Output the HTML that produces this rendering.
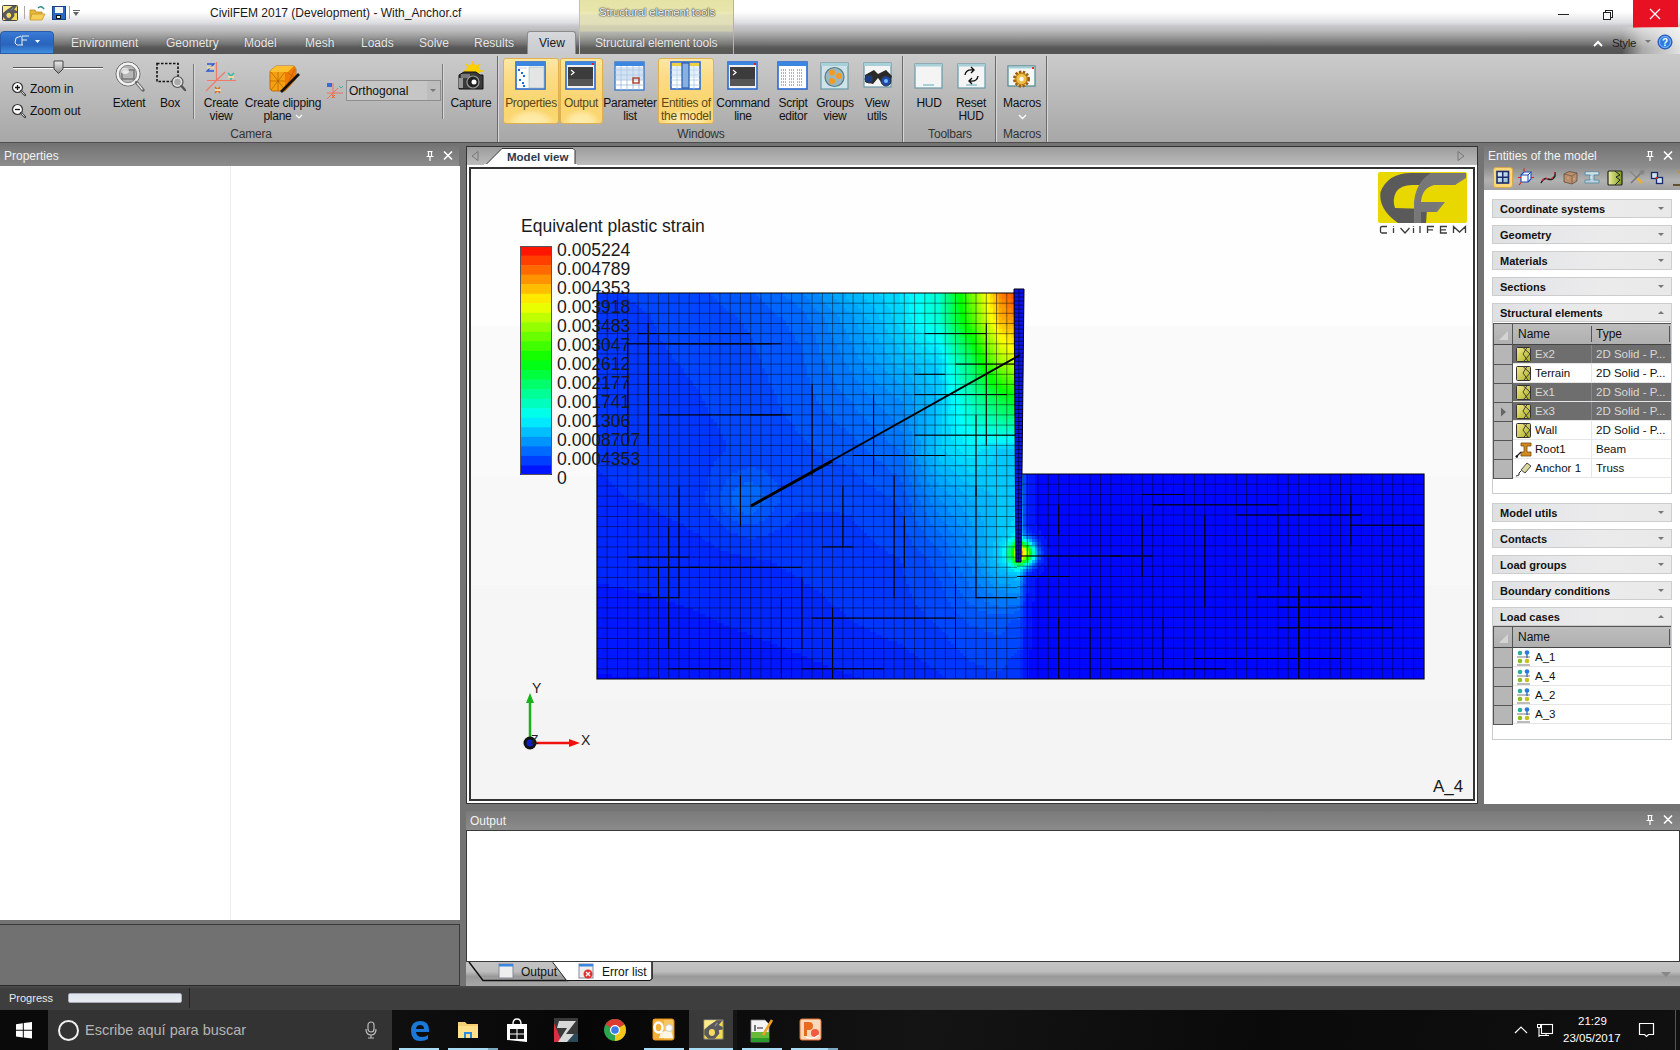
<!DOCTYPE html>
<html><head><meta charset="utf-8">
<style>
*{margin:0;padding:0;box-sizing:border-box}
html,body{width:1680px;height:1050px;overflow:hidden;background:#737373;font-family:"Liberation Sans",sans-serif;font-size:12px;position:relative;color:#111}
.a{position:absolute}
.t{position:absolute;white-space:nowrap;line-height:14px}
.c{position:absolute;white-space:nowrap;line-height:13px;text-align:center;width:120px;letter-spacing:-0.25px;color:#111}
#top{left:0;top:0;width:1680px;height:54px;background:linear-gradient(#fff 0px,#fff 12px,#f0f0f1 17px,#dcdde0 23px,#c8c8cc 26px,#bdbdbd 30px,#a5a5a5 35px,#8a8a8a 40px,#737373 44px,#5c5c5c 47px,#555 49px,#555 54px)}
#ribbon{left:0;top:54px;width:1680px;height:89px;background:linear-gradient(#cbcbcb,#a7a7a7);border-bottom:1px solid #4e4e4e}
.tab{position:absolute;top:35px;line-height:16px;color:#e6e6e6;text-shadow:0 0 2px #555}
.ph{position:absolute;background:linear-gradient(#767676,#8c8c8c);color:#f2f2f2;font-size:12px;line-height:20px;padding-left:4px}
.hl{position:absolute;top:58px;height:66px;border:1px solid #e0b050;border-radius:3px;background:radial-gradient(ellipse 45% 22% at 50% 100%,#fdeeb0 0%,#fde8a0 60%,rgba(253,232,160,0) 100%),linear-gradient(#fce7a4 0%,#fbdb84 30%,#fad674 60%,#fbd670 85%,#fbd878 100%)}
.gl{position:absolute;top:128px;color:#333;line-height:13px;text-align:center;width:120px;letter-spacing:-0.2px}
.sep{position:absolute;width:1px;background:#8a8a8a;border-right:1px solid #d0d0d0}
.gsep{position:absolute;top:56px;height:86px;width:1px;background:#6a6a6a;border-right:1px solid #d6d6d6;box-sizing:content-box}
.sec{position:absolute;left:1492px;width:180px;height:19px;border:1px solid #cdcdcd;background:linear-gradient(90deg,#dfe0e2 0,#e6e7e8 30%,#ebebec 60%,#e9e9ea 100%);font-weight:bold;font-size:11px;line-height:19px;padding-left:7px;color:#111}
.sec:after{content:"";position:absolute;right:7px;top:7px;border-left:3px solid transparent;border-right:3px solid transparent;border-top:3px solid #777}
.sec.up:after{border-top:none;border-bottom:3px solid #777}
#status{left:0;top:986px;width:1680px;height:24px;background:linear-gradient(#4c4c4c,#3e3e3e 3px,#3e3e3e)}
#task{left:0;top:1010px;width:1680px;height:40px;background:#111}
</style></head><body>
<!-- TOP BAR -->
<div id="top" class="a"></div>
<!-- QAT -->
<svg class="a" style="left:2px;top:5px" width="16" height="16"><rect x="0.5" y="0.5" width="15" height="15" rx="1" fill="#f4dc50" stroke="#444"/><path d="M1 1H10L1 9Z" fill="#fff0a0" opacity="0.8"/><path d="M10.5 1H15L12 4.5L15 6V8L12 8.5L12.5 11L9 15H4L1 12V8L4.5 5Z" fill="#5a5a5e"/><ellipse cx="6.8" cy="10.3" rx="2.3" ry="2.6" fill="#f6dc60"/><path d="M9 5.5L11 3" stroke="#9a9aa0" stroke-width="0.8"/></svg>
<div class="a" style="left:24px;top:6px;width:1px;height:13px;background:#aaa"></div>
<svg class="a" style="left:29px;top:5px" width="17" height="16"><path d="M1 5 L6 5 L7 7 L13 7 L13 14 L1 14Z" fill="#e8b83c" stroke="#b88a20" stroke-width="0.8"/><path d="M3 9 L16 9 L13 15 L1 15Z" fill="#f5cf5a" stroke="#c9952a" stroke-width="0.8"/><path d="M9 3 Q12 0 15 4" stroke="#2a8a8a" stroke-width="1.5" fill="none"/></svg>
<svg class="a" style="left:52px;top:6px" width="14" height="14"><rect x="0.5" y="0.5" width="13" height="13" fill="#2a66c8" stroke="#1a3f8a"/><rect x="3" y="1" width="8" height="6" fill="#f4f4f4"/><rect x="4" y="9" width="5" height="4" fill="#111"/><rect x="5" y="10" width="3" height="2" fill="#eee"/></svg>
<div class="a" style="left:69px;top:6px;width:1px;height:13px;background:#aaa"></div>
<div class="a" style="left:73px;top:10px;width:7px;height:1px;background:#666"></div>
<div class="a" style="left:73px;top:12px;border-left:3.5px solid transparent;border-right:3.5px solid transparent;border-top:4px solid #666"></div>
<div class="t" style="left:210px;top:6px;font-size:12px;color:#1a1a1a">CivilFEM 2017 (Development) - With_Anchor.cf</div>
<!-- contextual tab header -->
<div class="a" style="left:579px;top:0;width:155px;height:54px;border-left:1px solid #c8c690;border-right:1px solid #b8b690;background:linear-gradient(#e6e3a6 0,#e8e5ac 11px,#eceab4 13px,#e3e1b8 15px,#e1dfba 24px,#d2d0b2 26px,#cfcdb0 31px,rgba(200,200,160,0.15) 32px,rgba(200,200,160,0.08) 40px,rgba(200,200,160,0.04) 54px)"></div>
<div class="t" style="left:599px;top:5px;font-size:11.5px;color:#fafafa;text-shadow:0 0 1px #333,0 0 1px #333,0 0 2px #555"><span style="letter-spacing:-0.2px">Structural element tools</span></div>
<!-- window controls -->
<div class="a" style="left:1558px;top:14px;width:11px;height:1px;background:#222"></div>
<div class="a" style="left:1605px;top:10px;width:8px;height:8px;border:1px solid #222"></div>
<div class="a" style="left:1603px;top:12px;width:8px;height:8px;border:1px solid #222;background:#f7f7f7"></div>
<div class="a" style="left:1633px;top:0;width:45px;height:28px;background:#e81123"></div>
<svg class="a" style="left:1649px;top:8px" width="12" height="12"><path d="M1 1L11 11M11 1L1 11" stroke="#fff" stroke-width="1.3"/></svg>
<!-- app button & tabs -->
<div class="a" style="left:0;top:31px;width:54px;height:23px;border-radius:4px 4px 0 0;background:linear-gradient(#3a7bd5 0,#2f6ec8 30%,#2a64bc 60%,#3f8fe0 100%);border:1px solid #2a5aa8"></div>
<svg class="a" style="left:14px;top:35px" width="30" height="13"><path d="M7 1 L2 3 L1 8 L3 10 L9 10 M8 1 L15 1 M8 1 L8 10 M8 5 L13 5" stroke="#e8f0f0" stroke-width="1" fill="none"/><path d="M21 5 L26 5 L23.5 8Z" fill="#fff"/></svg>
<div class="tab" style="left:71px">Environment</div>
<div class="tab" style="left:166px">Geometry</div>
<div class="tab" style="left:244px">Model</div>
<div class="tab" style="left:305px">Mesh</div>
<div class="tab" style="left:361px">Loads</div>
<div class="tab" style="left:419px">Solve</div>
<div class="tab" style="left:474px">Results</div>
<div class="a" style="left:527px;top:31px;width:49px;height:23px;border-radius:3px 3px 0 0;background:linear-gradient(#d6d8dc,#c8cacd);border:1px solid #8c8c8c;border-bottom:none"></div>
<div class="tab" style="left:539px;color:#1a1a1a;text-shadow:none">View</div>
<div class="tab" style="left:595px;letter-spacing:-0.15px">Structural element tools</div>
<div class="a" style="left:1622px;top:27px;width:58px;height:27px;background:linear-gradient(90deg,rgba(255,255,255,0) 0,rgba(240,240,240,0.55) 35%,rgba(250,250,250,0.85) 100%)"></div>
<div class="a" style="left:1593px;top:37px;width:10px;height:8px"><svg width="10" height="8"><path d="M1 6 L5 2 L9 6" stroke="#fff" stroke-width="2" fill="none"/></svg></div>
<div class="t" style="left:1612px;top:36px;color:#222;font-size:11.5px;letter-spacing:-0.3px">Style</div>
<div class="a" style="left:1645px;top:40px;border-left:3px solid transparent;border-right:3px solid transparent;border-top:3px solid #777"></div>
<svg class="a" style="left:1657px;top:34px" width="16" height="16"><circle cx="8" cy="8" r="7" fill="#2f7ae0" stroke="#1a4ea8"/><circle cx="8" cy="8" r="5.5" fill="none" stroke="#9cc8ff" stroke-width="0.8"/><text x="8" y="12" font-size="10" font-weight="bold" fill="#fff" text-anchor="middle" font-family="Liberation Sans">?</text></svg>

<!-- RIBBON -->
<div id="ribbon" class="a"></div>
<!-- camera group -->
<div class="a" style="left:13px;top:67px;width:90px;height:2px;background:linear-gradient(#555 50%,#fff 50%)"></div>
<svg class="a" style="left:53px;top:60px" width="11" height="15"><path d="M1 1H10V9L5.5 13.5L1 9Z" fill="url(#thumbg)" stroke="#444" stroke-width="1"/><defs><linearGradient id="thumbg" x1="0" y1="0" x2="0" y2="1"><stop offset="0" stop-color="#eee"/><stop offset="1" stop-color="#888"/></linearGradient></defs></svg>
<svg class="a" style="left:11px;top:81px" width="16" height="16"><circle cx="6.5" cy="6.5" r="5" fill="#fafafa" stroke="#333" stroke-width="1.2"/><path d="M4 6.5H9M6.5 4V9" stroke="#111" stroke-width="1.3"/><path d="M10 10L14 14" stroke="#444" stroke-width="2.4" stroke-linecap="round"/><path d="M10.5 10.5L13.5 13.5" stroke="#ddd" stroke-width="1"/></svg>
<div class="t" style="left:30px;top:82px">Zoom in</div>
<svg class="a" style="left:11px;top:103px" width="16" height="16"><circle cx="6.5" cy="6.5" r="5" fill="#fafafa" stroke="#333" stroke-width="1.2"/><path d="M4 6.5H9" stroke="#111" stroke-width="1.3"/><path d="M10 10L14 14" stroke="#444" stroke-width="2.4" stroke-linecap="round"/><path d="M10.5 10.5L13.5 13.5" stroke="#ddd" stroke-width="1"/></svg>
<div class="t" style="left:30px;top:104px">Zoom out</div>
<!-- Extent -->
<svg class="a" style="left:113px;top:60px" width="34" height="34"><circle cx="15" cy="14" r="12" fill="#c8c8c8" stroke="#666" stroke-width="1"/><circle cx="15" cy="14" r="10.3" fill="none" stroke="#f2f2f2" stroke-width="2.2"/><circle cx="15" cy="14" r="8.6" fill="#b8b8b8" stroke="#777" stroke-width="0.8"/><rect x="9" y="10" width="12" height="9" fill="none" stroke="#666" stroke-width="1.2"/><ellipse cx="12" cy="11" rx="4" ry="3" fill="#fff" opacity="0.7"/><path d="M23.5 22.5L30 30" stroke="#666" stroke-width="3.4" stroke-linecap="round"/><path d="M24 23L29.5 29.5" stroke="#eee" stroke-width="1.2"/></svg>
<div class="c" style="left:69px;top:97px">Extent</div>
<!-- Box -->
<svg class="a" style="left:156px;top:62px" width="32" height="32"><rect x="1" y="1.5" width="21" height="18" fill="none" stroke="#111" stroke-width="1.6" stroke-dasharray="2.5 1.5"/><circle cx="21.5" cy="20" r="5.5" fill="#ccc" stroke="#555" stroke-width="1.2"/><circle cx="21.5" cy="20" r="4" fill="#aaa" stroke="#eee" stroke-width="1"/><path d="M25.5 24L29 28" stroke="#555" stroke-width="2.4" stroke-linecap="round"/></svg>
<div class="c" style="left:110px;top:97px">Box</div>
<div class="a" style="left:193px;top:64px;width:1px;height:55px;background:#7a7a7a;box-shadow:1px 0 0 #d6d6d6"></div>
<!-- Create view -->
<svg class="a" style="left:205px;top:61px" width="34" height="34"><path d="M11.5 1V20M2 19.5H31M20 11L1 30" stroke="#f07a68" stroke-width="1.2"/><path d="M2 3H9L2 10H9" stroke="#2a5ad0" stroke-width="1.3" fill="none"/><rect x="2" y="5.5" width="7" height="2" fill="#f0d8a0"/><path d="M23 12L26 15L29 12M26 15V19" stroke="#2ab8a0" stroke-width="1.4" fill="none"/><rect x="23" y="15" width="6" height="2" fill="#f0d8a0"/><path d="M10 26L15 32M15 26L10 32" stroke="#d86a20" stroke-width="1.4"/><rect x="10" y="28" width="6" height="2" fill="#f0d8a0"/></svg>
<div class="c" style="left:161px;top:97px">Create<br>view</div>
<!-- Create clipping plane -->
<svg class="a" style="left:268px;top:63px" width="34" height="32"><path d="M2 8L8 3H26L28 6V16L17 28H4L2 26Z" fill="#f5a010" stroke="#b86000" stroke-width="0.8"/><path d="M2 8L8 3H26L20 9H3Z" fill="#ffc030"/><path d="M20 9L26 3L28 6V16L17 28V9Z" fill="#f07a00"/><path d="M3 9L17 27M17 9L3 27M10 9V28M2 18H17M20 10L27 15M27 6L20 20" stroke="#a85800" stroke-width="0.6"/><path d="M13 29L31 11" stroke="#111" stroke-width="2.6"/></svg>
<div class="c" style="left:223px;top:97px">Create clipping<br>plane <svg width="8" height="6" style="vertical-align:middle"><path d="M1 1L4 4L7 1" stroke="#fff" stroke-width="1.2" fill="none"/></svg></div>
<!-- orthogonal -->
<svg class="a" style="left:326px;top:82px" width="18" height="18"><path d="M7 1V16M1 11H17M12 6L1 17" stroke="#f07060" stroke-width="1"/><rect x="1" y="1" width="5" height="4" fill="#3a6ad8"/><path d="M13 4L15 6L17 4" stroke="#2ab8a0" stroke-width="1" fill="none"/><path d="M6 13L9 16M9 13L6 16" stroke="#e07030" stroke-width="1"/></svg>
<div class="a" style="left:346px;top:80px;width:95px;height:21px;border:1px solid #8e8e8e;background:#c6c6c6"></div>
<div class="a" style="left:427px;top:81px;width:13px;height:19px;background:#bdbdbd"></div>
<div class="a" style="left:430px;top:89px;border-left:3.5px solid transparent;border-right:3.5px solid transparent;border-top:3.5px solid #777"></div>
<div class="t" style="left:349px;top:84px;font-size:12px">Orthogonal</div>
<div class="a" style="left:442px;top:64px;width:1px;height:55px;background:#7a7a7a;box-shadow:1px 0 0 #d6d6d6"></div>
<!-- Capture -->
<svg class="a" style="left:456px;top:61px" width="30" height="32"><circle cx="17" cy="10" r="7" fill="#ffd000"/><path d="M17 0V4M24 3L21.5 6M27 10H23M10 3L12.5 6M8 10H12" stroke="#ffc800" stroke-width="1.5"/><path d="M3 14L8 11H20L24 14H27V28H3Z" fill="#3a3a3a" stroke="#111"/><rect x="5" y="13" width="9" height="4" fill="#777"/><circle cx="17" cy="21" r="6" fill="#222" stroke="#999" stroke-width="1.2"/><circle cx="18" cy="21" r="2.5" fill="#fff"/><rect x="3" y="17" width="4" height="10" fill="#999"/></svg>
<div class="c" style="left:411px;top:97px">Capture</div>
<div class="gl" style="left:191px">Camera</div>
<div class="gsep" style="left:497px"></div>

<!-- windows group -->
<div class="hl" style="left:503px;width:56px"></div>
<div class="hl" style="left:560px;width:43px"></div>
<div class="hl" style="left:658px;width:56px"></div>
<svg class="a" style="left:515px;top:61px" width="32" height="30"><rect x="1" y="1" width="29" height="27" fill="#fff" stroke="#2a6ad0" stroke-width="1.6"/><rect x="1" y="1" width="29" height="4" fill="#3a86e0"/><rect x="14" y="6" width="15" height="21" fill="#e4e4e4" stroke="#8aa" stroke-width="0.5"/><path d="M3 7H12" stroke="#aac" stroke-width="0.6"/><rect x="3" y="8" width="2" height="2" fill="#1a6ae0"/><rect x="6" y="11" width="2" height="2" fill="#1a6ae0"/><rect x="8" y="14" width="2" height="2" fill="#1a6ae0"/><rect x="4" y="18" width="2" height="2" fill="#1a6ae0"/><rect x="7" y="21" width="2" height="2" fill="#1a6ae0"/><rect x="8" y="24" width="2" height="2" fill="#1a6ae0"/></svg>
<div class="c" style="left:471px;top:97px;color:#5a4818;letter-spacing:-0.3px">Properties</div>
<svg class="a" style="left:565px;top:61px" width="32" height="30"><rect x="1" y="1" width="29" height="27" fill="#f0f0f0" stroke="#2a6ad0" stroke-width="1.6"/><rect x="1" y="1" width="29" height="3" fill="#3a86e0"/><rect x="27" y="2" width="2" height="2" fill="#e02020"/><rect x="3" y="6" width="25" height="19" fill="#3c3c3c"/><rect x="3" y="18" width="25" height="7" fill="#555"/><path d="M6 9L9 11.5L6 14" stroke="#fff" stroke-width="1.2" fill="none"/></svg>
<div class="c" style="left:521px;top:97px;color:#5a4818;letter-spacing:-0.3px">Output</div>
<svg class="a" style="left:614px;top:61px" width="32" height="31"><rect x="1" y="1" width="29" height="28" fill="#fff" stroke="#3a7ad0" stroke-width="1.4"/><rect x="1" y="1" width="29" height="4" fill="#3a86e0"/><path d="M1 9H30M1 14H30M1 19H30M1 24H30M7 5V29M13 5V29M19 5V29M25 5V29" stroke="#9ab8d8" stroke-width="0.8"/><rect x="2" y="6" width="27" height="13" fill="#b8d0ec" opacity="0.6"/><rect x="19" y="17" width="6" height="5" fill="none" stroke="#b03010" stroke-width="1.3"/></svg>
<div class="c" style="left:570px;top:97px;letter-spacing:-0.3px">Parameter<br>list</div>
<svg class="a" style="left:670px;top:61px" width="32" height="30"><rect x="1" y="1" width="29" height="27" fill="#fff" stroke="#2a6ad0" stroke-width="1.6"/><rect x="2" y="2" width="27" height="3" fill="#f0d040"/><path d="M1 9H30M1 14H30M1 19H30M1 24H30M7 5V28M24 5V28" stroke="#a8c8e8" stroke-width="0.8"/><rect x="2" y="5" width="27" height="12" fill="#c8e0f4" opacity="0.5"/><rect x="12" y="2" width="7" height="25" fill="#88b0e0" stroke="#2a5ab0" stroke-width="1.2"/></svg>
<div class="c" style="left:626px;top:97px;color:#5a4818;letter-spacing:-0.3px">Entities of<br>the model</div>
<svg class="a" style="left:727px;top:61px" width="32" height="30"><rect x="1" y="1" width="29" height="27" fill="#f0f0f0" stroke="#2a6ad0" stroke-width="1.6"/><rect x="1" y="1" width="29" height="3" fill="#3a86e0"/><rect x="27" y="2" width="2" height="2" fill="#e02020"/><rect x="3" y="6" width="25" height="19" fill="#3c3c3c"/><rect x="3" y="18" width="25" height="7" fill="#555"/><path d="M6 9L9 11.5L6 14" stroke="#fff" stroke-width="1.2" fill="none"/></svg>
<div class="c" style="left:683px;top:97px;letter-spacing:-0.3px">Command<br>line</div>
<svg class="a" style="left:777px;top:61px" width="32" height="30"><rect x="1" y="1" width="29" height="27" fill="#fff" stroke="#2a6ad0" stroke-width="1.6"/><rect x="1" y="1" width="29" height="4" fill="#3a86e0"/><path d="M4 9H10M12 9H18M20 9H26M4 12H10M12 12H18M20 12H26M4 15H10M12 15H18M20 15H26M4 18H10M12 18H18M20 18H26M4 21H10M12 21H18M20 21H26M4 24H10M12 24H18M20 24H26" stroke="#556" stroke-width="0.9" stroke-dasharray="1 1"/></svg>
<div class="c" style="left:733px;top:97px;letter-spacing:-0.3px">Script<br>editor</div>
<svg class="a" style="left:820px;top:62px" width="30" height="30"><rect x="1" y="1" width="27" height="26" fill="#cfe4e8" stroke="#6a9aa8" stroke-width="1.2"/><rect x="1" y="1" width="27" height="3" fill="#a8d0d8"/><circle cx="14.5" cy="15" r="9.5" fill="#9ab8c0" stroke="#5a7a88" stroke-width="1.2"/><circle cx="12" cy="10.5" r="3" fill="#f59a20"/><circle cx="19" cy="14" r="3" fill="#f59a20"/><circle cx="12" cy="19" r="3" fill="#f59a20"/></svg>
<div class="c" style="left:775px;top:97px;letter-spacing:-0.3px">Groups<br>view</div>
<svg class="a" style="left:862px;top:62px" width="32" height="30"><rect x="2" y="1" width="27" height="24" fill="#f4f4f4" stroke="#6a9aa8" stroke-width="1.2"/><rect x="2" y="1" width="27" height="3" fill="#a8d0d8"/><path d="M3 13L12 8L16 12L24 8L30 14L28 22L19 20L16 16L11 22L3 20Z" fill="#2a2a2a"/><circle cx="7" cy="17" r="4" fill="#1a3a8a" stroke="#333"/><circle cx="24" cy="19" r="5" fill="#1a4aa8" stroke="#333"/><circle cx="24" cy="19" r="2" fill="#7ab8ff"/></svg>
<div class="c" style="left:817px;top:97px;letter-spacing:-0.3px">View<br>utils</div>
<div class="gl" style="left:641px">Windows</div>
<div class="gsep" style="left:902px"></div>

<!-- toolbars -->
<svg class="a" style="left:914px;top:63px" width="30" height="28"><rect x="1" y="1" width="27" height="24" fill="#f4f4f4" stroke="#6a9aa8" stroke-width="1.2"/><rect x="1" y="1" width="27" height="2.5" fill="#a8d0d8"/><rect x="9" y="21" width="11" height="2" fill="#a8d0d8"/></svg>
<div class="c" style="left:869px;top:97px">HUD</div>
<svg class="a" style="left:957px;top:63px" width="30" height="28"><rect x="1" y="1" width="27" height="24" fill="#f4f4f4" stroke="#6a9aa8" stroke-width="1.2"/><rect x="1" y="1" width="27" height="2.5" fill="#a8d0d8"/><rect x="9" y="21" width="11" height="2" fill="#a8d0d8"/><path d="M8 12Q9 6 16 7M14 4L17 7L14 10M21 13Q20 19 13 18M15 15L12 18L15 21" stroke="#111" stroke-width="1.4" fill="none"/></svg>
<div class="c" style="left:911px;top:97px">Reset<br>HUD</div>
<div class="gl" style="left:890px">Toolbars</div>
<div class="gsep" style="left:995px"></div>
<svg class="a" style="left:1007px;top:65px" width="30" height="26"><rect x="1" y="1" width="27" height="20" fill="#f6f8f8" stroke="#4a8a90" stroke-width="1.2"/><rect x="1.5" y="1.5" width="26" height="2" fill="#a8d0d8"/><rect x="25" y="2" width="2" height="2" fill="#e03030"/><circle cx="14.5" cy="14" r="7.2" fill="#f2c040" stroke="#9a5a10" stroke-width="2.6" stroke-dasharray="2.3 1.6"/><circle cx="14.5" cy="14" r="5.6" fill="#f0c048" stroke="#a86a18" stroke-width="0.8"/><circle cx="14.5" cy="14" r="2.2" fill="#fff"/></svg>
<div class="c" style="left:962px;top:97px">Macros<br><svg width="9" height="6" style="vertical-align:middle"><path d="M1 1L4.5 4.5L8 1" stroke="#fff" stroke-width="1.3" fill="none"/></svg></div>
<div class="gl" style="left:962px">Macros</div>
<div class="gsep" style="left:1046px"></div>


<!-- PROPERTIES PANEL -->
<div class="ph" style="left:0;top:146px;width:459px;height:20px">Properties</div>
<svg class="a" style="left:425px;top:150px" width="30" height="12"><path d="M2.5 1.5H7.5M3.5 1.5V6.5M6.5 1.5V6.5M1.5 6.5H8.5M5 6.5V11" stroke="#fff" stroke-width="1.2" fill="none"/><path d="M19 1.5L27 9.5M27 1.5L19 9.5" stroke="#fff" stroke-width="1.6"/></svg>
<div class="a" style="left:0;top:166px;width:460px;height:754px;background:#fff"></div>
<div class="a" style="left:230px;top:166px;width:1px;height:754px;background:#eeeeee"></div>
<div class="a" style="left:0;top:924px;width:460px;height:62px;background:#717171;border-top:1px solid #3a3a3a;border-right:1px solid #3a3a3a;border-bottom:1px solid #2a2a2a"></div>

<!-- MODEL VIEW -->
<div class="a" style="left:466px;top:146px;width:1012px;height:658px;background:#333"></div>
<div class="a" style="left:467px;top:147px;width:1010px;height:18px;background:linear-gradient(#9c9c9c,#bcbcbc)"></div>
<svg class="a" style="left:470px;top:150px" width="10" height="12"><path d="M8 1.5V10.5L2 6Z" fill="none" stroke="#777" stroke-width="1"/></svg>
<svg class="a" style="left:1456px;top:150px" width="10" height="12"><path d="M2 1.5V10.5L8 6Z" fill="none" stroke="#777" stroke-width="1"/></svg>
<svg class="a" style="left:484px;top:147px" width="94" height="20"><path d="M1 18.5L18 1.5H89L91 3.5V18.5" fill="#fff" stroke="#333" stroke-width="1"/><rect x="0" y="17" width="93" height="3" fill="#fff"/></svg>
<div class="t" style="left:507px;top:150px;font-weight:bold;font-size:11.5px;color:#2a3a50">Model view</div>
<div class="a" style="left:467px;top:165px;width:1010px;height:638px;background:#fff"></div>
<div class="a" style="left:469px;top:167px;width:1006px;height:634px;background:#333"></div>
<div class="a" style="left:471px;top:169px;width:1002px;height:630px;background:linear-gradient(#fefefe 0,#fefefe 157px,#fafafa 157px,#fafafa 307px,#f8f8f8 307px,#f8f8f8 416px,#f6f6f6 416px,#f6f6f6 531px,#f4f4f4 531px)"></div>
<!-- legend -->
<div class="t" style="left:521px;top:216px;font-size:17.5px;line-height:20px;color:#1a1a1a">Equivalent plastic strain</div>
<svg class="a" style="left:520px;top:246px" width="32" height="229"><g><rect x="0" y="0.00" width="32" height="10.14" fill="#ff1500"/><rect x="0" y="9.54" width="32" height="10.14" fill="#ff3f00"/><rect x="0" y="19.08" width="32" height="10.14" fill="#ff6a00"/><rect x="0" y="28.62" width="32" height="10.14" fill="#ff9400"/><rect x="0" y="38.17" width="32" height="10.14" fill="#ffbf00"/><rect x="0" y="47.71" width="32" height="10.14" fill="#ffe900"/><rect x="0" y="57.25" width="32" height="10.14" fill="#e9ff00"/><rect x="0" y="66.79" width="32" height="10.14" fill="#bfff00"/><rect x="0" y="76.33" width="32" height="10.14" fill="#94ff00"/><rect x="0" y="85.88" width="32" height="10.14" fill="#6aff00"/><rect x="0" y="95.42" width="32" height="10.14" fill="#3fff00"/><rect x="0" y="104.96" width="32" height="10.14" fill="#15ff00"/><rect x="0" y="114.50" width="32" height="10.14" fill="#00ff15"/><rect x="0" y="124.04" width="32" height="10.14" fill="#00ff3f"/><rect x="0" y="133.58" width="32" height="10.14" fill="#00ff6a"/><rect x="0" y="143.12" width="32" height="10.14" fill="#00ff94"/><rect x="0" y="152.67" width="32" height="10.14" fill="#00ffbf"/><rect x="0" y="162.21" width="32" height="10.14" fill="#00ffe9"/><rect x="0" y="171.75" width="32" height="10.14" fill="#00e9ff"/><rect x="0" y="181.29" width="32" height="10.14" fill="#00bfff"/><rect x="0" y="190.83" width="32" height="10.14" fill="#0094ff"/><rect x="0" y="200.38" width="32" height="10.14" fill="#006aff"/><rect x="0" y="209.92" width="32" height="10.14" fill="#003fff"/><rect x="0" y="219.46" width="32" height="10.14" fill="#0015ff"/></g><rect x="0.5" y="0.5" width="31" height="228" rx="1.5" fill="none" stroke="#555" stroke-width="1"/></svg>
<svg class="a" style="left:470px;top:170px" width="1004" height="630"><defs><clipPath id="mc"><path d="M127.0 123.0H547V304H954V509H127Z"/></clipPath></defs><g clip-path="url(#mc)"><path fill="#0037ff" d="M127 123h27v3h-27zM127 126h30v3h-30zM127 129h33v3h-33zM127 132h39v3h-39zM127 135h42v3h-42zM127 138h45v3h-45zM127 141h48v3h-48zM127 144h54v3h-54zM127 147h54v3h-54zM127 150h57v3h-57zM127 153h57v3h-57zM127 156h60v3h-60zM127 159h60v3h-60zM127 162h60v3h-60zM127 165h63v3h-63zM127 168h63v3h-63zM127 171h66v3h-66zM127 174h69v3h-69zM127 177h69v3h-69zM127 180h72v3h-72zM127 183h75v3h-75zM127 186h75v3h-75zM127 189h78v3h-78zM127 192h81v3h-81zM127 195h84v3h-84zM127 198h87v3h-87zM127 201h87v3h-87zM127 204h90v3h-90zM127 207h93v3h-93zM127 210h96v3h-96zM127 213h96v3h-96zM127 216h99v3h-99zM127 219h102v3h-102zM127 222h102v3h-102zM127 225h105v3h-105zM127 228h105v3h-105zM127 231h108v3h-108zM127 234h108v3h-108zM127 237h111v3h-111zM127 240h111v3h-111zM127 243h114v3h-114zM127 246h114v3h-114zM127 249h117v3h-117zM127 252h120v3h-120zM127 255h120v3h-120zM127 258h123v3h-123zM127 261h123v3h-123zM127 264h126v3h-126zM127 267h126v3h-126zM127 270h129v3h-129zM127 273h129v3h-129zM127 276h129v3h-129zM127 279h129v3h-129zM127 282h126v3h-126zM127 285h123v3h-123zM127 288h120v3h-120zM127 291h117v3h-117zM127 294h117v3h-117zM127 297h114v3h-114zM130 300h111v3h-111zM133 303h108v3h-108zM136 306h102v3h-102zM139 309h99v3h-99zM142 312h96v3h-96zM145 315h93v3h-93zM148 318h90v3h-90zM151 321h84v3h-84zM154 324h81v3h-81zM157 327h78v3h-78zM166 330h69v3h-69zM175 333h63v3h-63zM181 336h57v3h-57zM187 339h54v3h-54zM190 342h51v3h-51zM328 342h42v3h-42zM196 345h48v3h-48zM325 345h57v3h-57zM202 348h45v3h-45zM322 348h60v3h-60zM208 351h42v3h-42zM319 351h66v3h-66zM214 354h39v3h-39zM316 354h72v3h-72zM217 357h39v3h-39zM310 357h81v3h-81zM556 357h3v3h-3zM223 360h36v3h-36zM304 360h90v3h-90zM556 360h3v3h-3zM229 363h39v3h-39zM298 363h99v3h-99zM559 363h3v3h-3zM232 366h45v3h-45zM286 366h114v3h-114zM235 369h168v3h-168zM241 372h165v3h-165zM568 372h3v3h-3zM244 375h165v3h-165zM250 378h165v3h-165zM259 381h159v3h-159zM571 381h3v3h-3zM271 384h153v3h-153zM571 384h3v3h-3zM286 387h144v3h-144zM301 390h129v3h-129zM568 390h3v3h-3zM307 393h126v3h-126zM310 396h123v3h-123zM565 396h3v3h-3zM316 399h117v3h-117zM322 402h111v3h-111zM556 402h3v3h-3zM325 405h111v3h-111zM331 408h105v3h-105zM334 411h102v3h-102zM340 414h99v3h-99zM553 414h3v3h-3zM343 417h96v3h-96zM553 417h3v3h-3zM349 420h90v3h-90zM553 420h3v3h-3zM352 423h90v3h-90zM553 423h3v3h-3zM355 426h87v3h-87zM553 426h3v3h-3zM358 429h87v3h-87zM553 429h3v3h-3zM361 432h84v3h-84zM364 435h84v3h-84zM370 438h81v3h-81zM373 441h81v3h-81zM376 444h78v3h-78zM379 447h78v3h-78zM550 447h3v3h-3zM382 450h81v3h-81zM550 450h3v3h-3zM388 453h78v3h-78zM550 453h3v3h-3zM394 456h75v3h-75zM550 456h3v3h-3zM400 459h72v3h-72zM550 459h3v3h-3zM406 462h69v3h-69zM550 462h3v3h-3zM412 465h66v3h-66zM550 465h3v3h-3zM418 468h60v3h-60zM550 468h3v3h-3zM427 471h54v3h-54zM550 471h3v3h-3zM433 474h51v3h-51zM550 474h3v3h-3zM436 477h51v3h-51zM550 477h3v3h-3zM439 480h51v3h-51zM547 480h3v3h-3zM445 483h48v3h-48zM544 483h6v3h-6zM448 486h48v3h-48zM541 486h9v3h-9zM451 489h48v3h-48zM538 489h12v3h-12zM457 492h48v3h-48zM538 492h12v3h-12zM460 495h54v3h-54zM535 495h15v3h-15zM466 498h54v3h-54zM532 498h18v3h-18zM469 501h81v3h-81zM472 504h78v3h-78zM475 507h75v3h-75z"/><path fill="#0047ff" d="M154 123h87v3h-87zM157 126h87v3h-87zM160 129h87v3h-87zM166 132h84v3h-84zM169 135h84v3h-84zM172 138h84v3h-84zM175 141h84v3h-84zM181 144h84v3h-84zM181 147h87v3h-87zM184 150h87v3h-87zM184 153h90v3h-90zM187 156h87v3h-87zM187 159h90v3h-90zM187 162h93v3h-93zM190 165h90v3h-90zM190 168h93v3h-93zM193 171h90v3h-90zM196 174h87v3h-87zM196 177h90v3h-90zM199 180h87v3h-87zM202 183h87v3h-87zM202 186h87v3h-87zM205 189h87v3h-87zM208 192h84v3h-84zM211 195h81v3h-81zM214 198h81v3h-81zM214 201h81v3h-81zM217 204h81v3h-81zM220 207h78v3h-78zM223 210h75v3h-75zM223 213h78v3h-78zM226 216h75v3h-75zM229 219h75v3h-75zM229 222h75v3h-75zM232 225h75v3h-75zM232 228h75v3h-75zM235 231h72v3h-72zM235 234h75v3h-75zM238 237h75v3h-75zM238 240h75v3h-75zM241 243h75v3h-75zM241 246h75v3h-75zM244 249h75v3h-75zM247 252h75v3h-75zM247 255h78v3h-78zM250 258h75v3h-75zM250 261h78v3h-78zM253 264h78v3h-78zM253 267h81v3h-81zM256 270h81v3h-81zM256 273h84v3h-84zM256 276h87v3h-87zM256 279h90v3h-90zM253 282h99v3h-99zM250 285h105v3h-105zM247 288h114v3h-114zM244 291h123v3h-123zM244 294h132v3h-132zM241 297h36v3h-36zM286 297h96v3h-96zM241 300h27v3h-27zM295 300h90v3h-90zM241 303h21v3h-21zM298 303h90v3h-90zM553 303h3v3h-3zM238 306h21v3h-21zM301 306h90v3h-90zM553 306h3v3h-3zM238 309h18v3h-18zM304 309h90v3h-90zM553 309h3v3h-3zM238 312h18v3h-18zM307 312h90v3h-90zM553 312h3v3h-3zM238 315h15v3h-15zM307 315h96v3h-96zM553 315h3v3h-3zM238 318h15v3h-15zM307 318h99v3h-99zM553 318h3v3h-3zM235 321h15v3h-15zM310 321h102v3h-102zM553 321h3v3h-3zM235 324h15v3h-15zM310 324h105v3h-105zM553 324h3v3h-3zM235 327h15v3h-15zM310 327h111v3h-111zM553 327h3v3h-3zM235 330h15v3h-15zM310 330h114v3h-114zM553 330h3v3h-3zM238 333h12v3h-12zM307 333h120v3h-120zM553 333h3v3h-3zM238 336h15v3h-15zM304 336h126v3h-126zM553 336h3v3h-3zM241 339h12v3h-12zM304 339h126v3h-126zM553 339h3v3h-3zM241 342h15v3h-15zM301 342h27v3h-27zM370 342h63v3h-63zM553 342h3v3h-3zM244 345h15v3h-15zM298 345h27v3h-27zM382 345h51v3h-51zM553 345h3v3h-3zM247 348h15v3h-15zM295 348h27v3h-27zM382 348h51v3h-51zM553 348h3v3h-3zM250 351h18v3h-18zM289 351h30v3h-30zM385 351h48v3h-48zM553 351h3v3h-3zM253 354h63v3h-63zM388 354h48v3h-48zM553 354h3v3h-3zM256 357h54v3h-54zM391 357h45v3h-45zM259 360h45v3h-45zM394 360h42v3h-42zM268 363h30v3h-30zM397 363h42v3h-42zM277 366h9v3h-9zM400 366h39v3h-39zM562 366h3v3h-3zM403 369h39v3h-39zM565 369h3v3h-3zM406 372h36v3h-36zM409 375h36v3h-36zM568 375h3v3h-3zM415 378h33v3h-33zM418 381h33v3h-33zM424 384h30v3h-30zM430 387h27v3h-27zM430 390h30v3h-30zM433 393h27v3h-27zM565 393h3v3h-3zM433 396h30v3h-30zM562 396h3v3h-3zM433 399h30v3h-30zM559 399h3v3h-3zM433 402h33v3h-33zM436 405h30v3h-30zM553 405h3v3h-3zM436 408h33v3h-33zM553 408h3v3h-3zM436 411h36v3h-36zM553 411h3v3h-3zM439 414h33v3h-33zM439 417h33v3h-33zM439 420h36v3h-36zM442 423h33v3h-33zM442 426h33v3h-33zM445 429h33v3h-33zM445 432h36v3h-36zM448 435h33v3h-33zM550 435h3v3h-3zM451 438h33v3h-33zM550 438h3v3h-3zM454 441h33v3h-33zM550 441h3v3h-3zM454 444h36v3h-36zM550 444h3v3h-3zM457 447h36v3h-36zM463 450h33v3h-33zM541 450h9v3h-9zM466 453h33v3h-33zM538 453h12v3h-12zM469 456h39v3h-39zM535 456h15v3h-15zM472 459h42v3h-42zM535 459h15v3h-15zM475 462h48v3h-48zM532 462h18v3h-18zM478 465h72v3h-72zM478 468h72v3h-72zM481 471h69v3h-69zM484 474h66v3h-66zM487 477h63v3h-63zM490 480h57v3h-57zM493 483h51v3h-51zM496 486h45v3h-45zM499 489h39v3h-39zM505 492h33v3h-33zM514 495h21v3h-21zM520 498h12v3h-12z"/><path fill="#0057ff" d="M241 123h45v3h-45zM244 126h45v3h-45zM247 129h45v3h-45zM250 132h45v3h-45zM253 135h45v3h-45zM256 138h45v3h-45zM259 141h45v3h-45zM265 144h42v3h-42zM268 147h45v3h-45zM271 150h45v3h-45zM274 153h42v3h-42zM274 156h45v3h-45zM277 159h42v3h-42zM280 162h42v3h-42zM280 165h45v3h-45zM283 168h42v3h-42zM283 171h45v3h-45zM283 174h48v3h-48zM286 177h45v3h-45zM286 180h45v3h-45zM289 183h45v3h-45zM289 186h45v3h-45zM292 189h42v3h-42zM292 192h42v3h-42zM292 195h45v3h-45zM295 198h42v3h-42zM295 201h42v3h-42zM298 204h39v3h-39zM298 207h42v3h-42zM298 210h42v3h-42zM301 213h39v3h-39zM301 216h42v3h-42zM304 219h39v3h-39zM304 222h39v3h-39zM307 225h39v3h-39zM307 228h39v3h-39zM307 231h42v3h-42zM310 234h42v3h-42zM313 237h39v3h-39zM313 240h42v3h-42zM316 243h42v3h-42zM316 246h45v3h-45zM319 249h45v3h-45zM322 252h45v3h-45zM325 255h45v3h-45zM325 258h51v3h-51zM328 261h51v3h-51zM331 264h51v3h-51zM334 267h51v3h-51zM337 270h51v3h-51zM340 273h51v3h-51zM343 276h51v3h-51zM346 279h51v3h-51zM352 282h48v3h-48zM355 285h48v3h-48zM361 288h45v3h-45zM367 291h45v3h-45zM376 294h39v3h-39zM277 297h9v3h-9zM382 297h36v3h-36zM268 300h27v3h-27zM385 300h36v3h-36zM262 303h36v3h-36zM388 303h39v3h-39zM259 306h42v3h-42zM391 306h39v3h-39zM256 309h48v3h-48zM394 309h36v3h-36zM256 312h18v3h-18zM283 312h24v3h-24zM397 312h36v3h-36zM253 315h15v3h-15zM289 315h18v3h-18zM403 315h30v3h-30zM253 318h12v3h-12zM292 318h15v3h-15zM406 318h27v3h-27zM250 321h12v3h-12zM292 321h18v3h-18zM412 321h24v3h-24zM250 324h12v3h-12zM295 324h15v3h-15zM415 324h21v3h-21zM250 327h12v3h-12zM295 327h15v3h-15zM421 327h18v3h-18zM250 330h12v3h-12zM295 330h15v3h-15zM424 330h15v3h-15zM250 333h12v3h-12zM292 333h15v3h-15zM427 333h15v3h-15zM253 336h12v3h-12zM289 336h15v3h-15zM430 336h12v3h-12zM253 339h15v3h-15zM286 339h18v3h-18zM430 339h12v3h-12zM256 342h18v3h-18zM283 342h18v3h-18zM433 342h12v3h-12zM259 345h39v3h-39zM433 345h12v3h-12zM262 348h33v3h-33zM433 348h12v3h-12zM268 351h21v3h-21zM433 351h15v3h-15zM436 354h12v3h-12zM436 357h15v3h-15zM553 357h3v3h-3zM436 360h18v3h-18zM439 363h15v3h-15zM556 363h3v3h-3zM439 366h18v3h-18zM442 369h18v3h-18zM442 372h21v3h-21zM445 375h21v3h-21zM448 378h21v3h-21zM568 378h3v3h-3zM451 381h21v3h-21zM454 384h18v3h-18zM568 384h3v3h-3zM457 387h18v3h-18zM568 387h3v3h-3zM460 390h15v3h-15zM460 393h18v3h-18zM463 396h15v3h-15zM463 399h15v3h-15zM466 402h15v3h-15zM466 405h15v3h-15zM469 408h15v3h-15zM472 411h12v3h-12zM472 414h15v3h-15zM472 417h15v3h-15zM475 420h15v3h-15zM475 423h18v3h-18zM475 426h18v3h-18zM550 426h3v3h-3zM478 429h18v3h-18zM550 429h3v3h-3zM481 432h18v3h-18zM550 432h3v3h-3zM481 435h24v3h-24zM484 438h24v3h-24zM487 441h30v3h-30zM544 441h6v3h-6zM490 444h60v3h-60zM493 447h57v3h-57zM496 450h45v3h-45zM499 453h39v3h-39zM508 456h27v3h-27zM514 459h21v3h-21zM523 462h9v3h-9z"/><path fill="#0067ff" d="M286 123h27v3h-27zM289 126h27v3h-27zM292 129h30v3h-30zM295 132h30v3h-30zM298 135h30v3h-30zM301 138h30v3h-30zM304 141h30v3h-30zM307 144h30v3h-30zM313 147h24v3h-24zM316 150h24v3h-24zM316 153h24v3h-24zM319 156h24v3h-24zM319 159h24v3h-24zM322 162h21v3h-21zM325 165h21v3h-21zM325 168h21v3h-21zM328 171h18v3h-18zM331 174h18v3h-18zM331 177h18v3h-18zM331 180h18v3h-18zM334 183h18v3h-18zM334 186h18v3h-18zM334 189h21v3h-21zM334 192h21v3h-21zM337 195h21v3h-21zM337 198h21v3h-21zM337 201h24v3h-24zM337 204h24v3h-24zM340 207h24v3h-24zM340 210h24v3h-24zM340 213h27v3h-27zM343 216h24v3h-24zM343 219h27v3h-27zM343 222h30v3h-30zM346 225h30v3h-30zM346 228h33v3h-33zM349 231h33v3h-33zM352 234h33v3h-33zM352 237h33v3h-33zM355 240h33v3h-33zM358 243h33v3h-33zM361 246h33v3h-33zM364 249h33v3h-33zM367 252h33v3h-33zM370 255h33v3h-33zM376 258h30v3h-30zM379 261h30v3h-30zM382 264h30v3h-30zM385 267h30v3h-30zM388 270h30v3h-30zM391 273h30v3h-30zM394 276h33v3h-33zM397 279h33v3h-33zM400 282h30v3h-30zM403 285h30v3h-30zM406 288h27v3h-27zM412 291h21v3h-21zM415 294h18v3h-18zM418 297h18v3h-18zM421 300h15v3h-15zM427 303h9v3h-9zM430 306h9v3h-9zM430 309h9v3h-9zM274 312h9v3h-9zM433 312h9v3h-9zM268 315h21v3h-21zM433 315h9v3h-9zM265 318h27v3h-27zM433 318h12v3h-12zM262 321h30v3h-30zM436 321h9v3h-9zM262 324h33v3h-33zM436 324h12v3h-12zM262 327h33v3h-33zM439 327h9v3h-9zM262 330h33v3h-33zM439 330h12v3h-12zM262 333h30v3h-30zM442 333h9v3h-9zM265 336h24v3h-24zM442 336h12v3h-12zM268 339h18v3h-18zM442 339h12v3h-12zM274 342h9v3h-9zM445 342h12v3h-12zM445 345h12v3h-12zM445 348h15v3h-15zM448 351h12v3h-12zM448 354h15v3h-15zM451 357h15v3h-15zM454 360h15v3h-15zM553 360h3v3h-3zM454 363h18v3h-18zM457 366h15v3h-15zM559 366h3v3h-3zM460 369h15v3h-15zM562 369h3v3h-3zM463 372h15v3h-15zM565 372h3v3h-3zM466 375h12v3h-12zM469 378h12v3h-12zM472 381h9v3h-9zM568 381h3v3h-3zM472 384h12v3h-12zM475 387h9v3h-9zM475 390h12v3h-12zM478 393h9v3h-9zM478 396h12v3h-12zM478 399h12v3h-12zM556 399h3v3h-3zM481 402h12v3h-12zM553 402h3v3h-3zM481 405h12v3h-12zM484 408h12v3h-12zM484 411h15v3h-15zM487 414h12v3h-12zM487 417h15v3h-15zM550 417h3v3h-3zM490 420h15v3h-15zM550 420h3v3h-3zM493 423h15v3h-15zM550 423h3v3h-3zM493 426h18v3h-18zM496 429h18v3h-18zM499 432h21v3h-21zM505 435h24v3h-24zM538 435h12v3h-12zM508 438h42v3h-42zM517 441h27v3h-27z"/><path fill="#0077ff" d="M313 123h21v3h-21zM316 126h21v3h-21zM322 129h18v3h-18zM325 132h15v3h-15zM328 135h15v3h-15zM331 138h15v3h-15zM334 141h15v3h-15zM337 144h15v3h-15zM337 147h18v3h-18zM340 150h15v3h-15zM340 153h18v3h-18zM343 156h15v3h-15zM343 159h15v3h-15zM343 162h18v3h-18zM346 165h15v3h-15zM346 168h18v3h-18zM346 171h18v3h-18zM349 174h18v3h-18zM349 177h18v3h-18zM349 180h21v3h-21zM352 183h18v3h-18zM352 186h21v3h-21zM355 189h18v3h-18zM355 192h21v3h-21zM358 195h21v3h-21zM358 198h21v3h-21zM361 201h21v3h-21zM361 204h21v3h-21zM364 207h21v3h-21zM364 210h24v3h-24zM367 213h24v3h-24zM367 216h24v3h-24zM370 219h24v3h-24zM373 222h24v3h-24zM376 225h24v3h-24zM379 228h24v3h-24zM382 231h24v3h-24zM385 234h24v3h-24zM385 237h27v3h-27zM388 240h27v3h-27zM391 243h27v3h-27zM394 246h27v3h-27zM397 249h27v3h-27zM400 252h27v3h-27zM403 255h27v3h-27zM406 258h24v3h-24zM409 261h24v3h-24zM412 264h21v3h-21zM415 267h18v3h-18zM418 270h18v3h-18zM421 273h15v3h-15zM427 276h9v3h-9zM430 279h6v3h-6zM430 282h9v3h-9zM433 285h6v3h-6zM433 288h6v3h-6zM433 291h9v3h-9zM433 294h9v3h-9zM436 297h6v3h-6zM436 300h9v3h-9zM436 303h9v3h-9zM439 306h9v3h-9zM439 309h9v3h-9zM442 312h9v3h-9zM442 315h9v3h-9zM445 318h9v3h-9zM445 321h9v3h-9zM448 324h9v3h-9zM448 327h12v3h-12zM451 330h9v3h-9zM451 333h12v3h-12zM454 336h9v3h-9zM454 339h12v3h-12zM457 342h12v3h-12zM457 345h12v3h-12zM460 348h12v3h-12zM460 351h15v3h-15zM463 354h15v3h-15zM466 357h12v3h-12zM469 360h12v3h-12zM472 363h12v3h-12zM553 363h3v3h-3zM472 366h12v3h-12zM475 369h12v3h-12zM478 372h9v3h-9zM478 375h12v3h-12zM481 378h12v3h-12zM481 381h12v3h-12zM484 384h12v3h-12zM484 387h12v3h-12zM487 390h9v3h-9zM565 390h3v3h-3zM487 393h12v3h-12zM562 393h3v3h-3zM490 396h12v3h-12zM559 396h3v3h-3zM490 399h12v3h-12zM493 402h9v3h-9zM493 405h12v3h-12zM496 408h12v3h-12zM499 411h9v3h-9zM550 411h3v3h-3zM499 414h12v3h-12zM550 414h3v3h-3zM502 417h12v3h-12zM505 420h12v3h-12zM508 423h15v3h-15zM511 426h15v3h-15zM514 429h36v3h-36zM520 432h30v3h-30zM529 435h9v3h-9z"/><path fill="#0087ff" d="M334 123h15v3h-15zM337 126h15v3h-15zM340 129h12v3h-12zM340 132h15v3h-15zM343 135h15v3h-15zM346 138h15v3h-15zM349 141h15v3h-15zM352 144h15v3h-15zM355 147h15v3h-15zM355 150h15v3h-15zM358 153h15v3h-15zM358 156h15v3h-15zM358 159h18v3h-18zM361 162h15v3h-15zM361 165h18v3h-18zM364 168h15v3h-15zM364 171h18v3h-18zM367 174h15v3h-15zM367 177h18v3h-18zM370 180h15v3h-15zM370 183h18v3h-18zM373 186h15v3h-15zM373 189h18v3h-18zM376 192h18v3h-18zM379 195h15v3h-15zM379 198h18v3h-18zM382 201h18v3h-18zM382 204h21v3h-21zM385 207h18v3h-18zM388 210h18v3h-18zM391 213h18v3h-18zM391 216h24v3h-24zM394 219h24v3h-24zM397 222h24v3h-24zM400 225h24v3h-24zM403 228h27v3h-27zM406 231h27v3h-27zM409 234h24v3h-24zM412 237h21v3h-21zM415 240h21v3h-21zM418 243h18v3h-18zM421 246h15v3h-15zM424 249h15v3h-15zM427 252h12v3h-12zM430 255h9v3h-9zM430 258h9v3h-9zM433 261h9v3h-9zM433 264h9v3h-9zM433 267h9v3h-9zM436 270h6v3h-6zM436 273h6v3h-6zM436 276h6v3h-6zM436 279h9v3h-9zM439 282h6v3h-6zM439 285h6v3h-6zM439 288h9v3h-9zM442 291h6v3h-6zM442 294h9v3h-9zM442 297h9v3h-9zM445 300h9v3h-9zM445 303h9v3h-9zM448 306h9v3h-9zM448 309h9v3h-9zM451 312h9v3h-9zM451 315h9v3h-9zM454 318h9v3h-9zM454 321h12v3h-12zM457 324h9v3h-9zM460 327h9v3h-9zM460 330h12v3h-12zM463 333h12v3h-12zM463 336h15v3h-15zM466 339h12v3h-12zM469 342h12v3h-12zM469 345h15v3h-15zM472 348h15v3h-15zM475 351h12v3h-12zM478 354h12v3h-12zM478 357h15v3h-15zM481 360h12v3h-12zM484 363h12v3h-12zM484 366h12v3h-12zM556 366h3v3h-3zM487 369h12v3h-12zM487 372h12v3h-12zM490 375h12v3h-12zM565 375h3v3h-3zM493 378h9v3h-9zM493 381h9v3h-9zM496 384h6v3h-6zM496 387h9v3h-9zM496 390h9v3h-9zM499 393h9v3h-9zM502 396h6v3h-6zM502 399h9v3h-9zM553 399h3v3h-3zM502 402h9v3h-9zM505 405h9v3h-9zM550 405h3v3h-3zM508 408h9v3h-9zM550 408h3v3h-3zM508 411h12v3h-12zM511 414h12v3h-12zM514 417h12v3h-12zM517 420h18v3h-18zM523 423h27v3h-27zM526 426h24v3h-24z"/><path fill="#0097ff" d="M349 123h12v3h-12zM352 126h12v3h-12zM352 129h15v3h-15zM355 132h15v3h-15zM358 135h15v3h-15zM361 138h15v3h-15zM364 141h15v3h-15zM367 144h15v3h-15zM370 147h15v3h-15zM370 150h15v3h-15zM373 153h15v3h-15zM373 156h15v3h-15zM376 159h15v3h-15zM376 162h15v3h-15zM379 165h15v3h-15zM379 168h15v3h-15zM382 171h15v3h-15zM382 174h15v3h-15zM385 177h15v3h-15zM385 180h15v3h-15zM388 183h15v3h-15zM388 186h18v3h-18zM391 189h15v3h-15zM394 192h15v3h-15zM394 195h18v3h-18zM397 198h18v3h-18zM400 201h18v3h-18zM403 204h18v3h-18zM403 207h21v3h-21zM406 210h21v3h-21zM409 213h21v3h-21zM415 216h18v3h-18zM418 219h18v3h-18zM421 222h18v3h-18zM424 225h18v3h-18zM430 228h12v3h-12zM433 231h12v3h-12zM433 234h12v3h-12zM433 237h12v3h-12zM436 240h9v3h-9zM436 243h9v3h-9zM436 246h12v3h-12zM439 249h9v3h-9zM439 252h9v3h-9zM439 255h9v3h-9zM439 258h9v3h-9zM442 261h6v3h-6zM442 264h6v3h-6zM442 267h6v3h-6zM442 270h9v3h-9zM442 273h9v3h-9zM442 276h9v3h-9zM445 279h6v3h-6zM445 282h6v3h-6zM445 285h9v3h-9zM448 288h6v3h-6zM448 291h9v3h-9zM451 294h6v3h-6zM451 297h9v3h-9zM454 300h6v3h-6zM454 303h9v3h-9zM550 303h3v3h-3zM457 306h6v3h-6zM550 306h3v3h-3zM457 309h9v3h-9zM550 309h3v3h-3zM460 312h9v3h-9zM550 312h3v3h-3zM460 315h9v3h-9zM550 315h3v3h-3zM463 318h12v3h-12zM550 318h3v3h-3zM466 321h12v3h-12zM550 321h3v3h-3zM466 324h15v3h-15zM550 324h3v3h-3zM469 327h15v3h-15zM550 327h3v3h-3zM472 330h15v3h-15zM550 330h3v3h-3zM475 333h15v3h-15zM550 333h3v3h-3zM478 336h15v3h-15zM550 336h3v3h-3zM478 339h15v3h-15zM550 339h3v3h-3zM481 342h15v3h-15zM550 342h3v3h-3zM484 345h15v3h-15zM550 345h3v3h-3zM487 348h12v3h-12zM550 348h3v3h-3zM487 351h15v3h-15zM550 351h3v3h-3zM490 354h12v3h-12zM550 354h3v3h-3zM493 357h12v3h-12zM550 357h3v3h-3zM493 360h12v3h-12zM496 363h9v3h-9zM496 366h12v3h-12zM499 369h9v3h-9zM499 372h9v3h-9zM502 375h6v3h-6zM502 378h6v3h-6zM502 381h9v3h-9zM502 384h9v3h-9zM505 387h6v3h-6zM565 387h3v3h-3zM505 390h6v3h-6zM508 393h6v3h-6zM508 396h9v3h-9zM511 399h6v3h-6zM511 402h9v3h-9zM514 405h9v3h-9zM517 408h9v3h-9zM520 411h9v3h-9zM523 414h18v3h-18zM526 417h24v3h-24zM535 420h15v3h-15z"/><path fill="#00a7ff" d="M361 123h15v3h-15zM364 126h12v3h-12zM367 129h12v3h-12zM370 132h15v3h-15zM373 135h15v3h-15zM376 138h15v3h-15zM379 141h12v3h-12zM382 144h12v3h-12zM385 147h12v3h-12zM385 150h15v3h-15zM388 153h12v3h-12zM388 156h15v3h-15zM391 159h12v3h-12zM391 162h15v3h-15zM394 165h12v3h-12zM394 168h15v3h-15zM397 171h12v3h-12zM397 174h15v3h-15zM400 177h15v3h-15zM400 180h15v3h-15zM403 183h15v3h-15zM406 186h15v3h-15zM406 189h15v3h-15zM409 192h15v3h-15zM412 195h15v3h-15zM415 198h18v3h-18zM418 201h18v3h-18zM421 204h18v3h-18zM424 207h18v3h-18zM427 210h15v3h-15zM430 213h15v3h-15zM433 216h15v3h-15zM436 219h15v3h-15zM439 222h12v3h-12zM442 225h12v3h-12zM442 228h12v3h-12zM445 231h12v3h-12zM445 234h12v3h-12zM445 237h12v3h-12zM445 240h12v3h-12zM445 243h12v3h-12zM448 246h9v3h-9zM448 249h9v3h-9zM448 252h9v3h-9zM448 255h9v3h-9zM448 258h9v3h-9zM448 261h9v3h-9zM448 264h9v3h-9zM448 267h9v3h-9zM451 270h6v3h-6zM451 273h6v3h-6zM451 276h6v3h-6zM451 279h6v3h-6zM451 282h9v3h-9zM454 285h6v3h-6zM454 288h9v3h-9zM457 291h6v3h-6zM457 294h9v3h-9zM460 297h6v3h-6zM460 300h9v3h-9zM463 303h9v3h-9zM463 306h12v3h-12zM466 309h12v3h-12zM469 312h12v3h-12zM469 315h18v3h-18zM475 318h15v3h-15zM478 321h15v3h-15zM481 324h15v3h-15zM484 327h15v3h-15zM487 330h18v3h-18zM490 333h15v3h-15zM493 336h15v3h-15zM493 339h15v3h-15zM496 342h15v3h-15zM499 345h12v3h-12zM499 348h12v3h-12zM502 351h12v3h-12zM502 354h12v3h-12zM505 357h9v3h-9zM505 360h9v3h-9zM550 360h3v3h-3zM505 363h9v3h-9zM508 366h9v3h-9zM508 369h9v3h-9zM559 369h3v3h-3zM508 372h9v3h-9zM562 372h3v3h-3zM508 375h9v3h-9zM508 378h9v3h-9zM565 378h3v3h-3zM511 381h6v3h-6zM511 384h6v3h-6zM511 387h6v3h-6zM511 390h9v3h-9zM514 393h6v3h-6zM517 396h6v3h-6zM556 396h3v3h-3zM517 399h9v3h-9zM520 402h9v3h-9zM550 402h3v3h-3zM523 405h12v3h-12zM526 408h18v3h-18zM529 411h21v3h-21zM541 414h9v3h-9z"/><path fill="#00b7ff" d="M376 123h15v3h-15zM376 126h18v3h-18zM379 129h18v3h-18zM385 132h15v3h-15zM388 135h15v3h-15zM391 138h15v3h-15zM391 141h15v3h-15zM394 144h15v3h-15zM397 147h12v3h-12zM400 150h12v3h-12zM400 153h15v3h-15zM403 156h12v3h-12zM403 159h15v3h-15zM406 162h12v3h-12zM406 165h15v3h-15zM409 168h15v3h-15zM409 171h15v3h-15zM412 174h15v3h-15zM415 177h15v3h-15zM415 180h15v3h-15zM418 183h15v3h-15zM421 186h15v3h-15zM421 189h21v3h-21zM424 192h21v3h-21zM427 195h21v3h-21zM433 198h18v3h-18zM436 201h15v3h-15zM439 204h15v3h-15zM442 207h15v3h-15zM442 210h15v3h-15zM445 213h15v3h-15zM448 216h15v3h-15zM451 219h12v3h-12zM451 222h15v3h-15zM454 225h12v3h-12zM454 228h15v3h-15zM457 231h12v3h-12zM457 234h9v3h-9zM457 237h9v3h-9zM457 240h9v3h-9zM457 243h9v3h-9zM457 246h9v3h-9zM457 249h9v3h-9zM457 252h9v3h-9zM457 255h9v3h-9zM457 258h9v3h-9zM457 261h9v3h-9zM457 264h9v3h-9zM457 267h9v3h-9zM457 270h9v3h-9zM457 273h9v3h-9zM457 276h9v3h-9zM457 279h9v3h-9zM460 282h6v3h-6zM460 285h9v3h-9zM463 288h6v3h-6zM463 291h9v3h-9zM466 294h9v3h-9zM466 297h15v3h-15zM469 300h15v3h-15zM472 303h15v3h-15zM475 306h15v3h-15zM478 309h15v3h-15zM481 312h18v3h-18zM487 315h18v3h-18zM490 318h24v3h-24zM493 321h27v3h-27zM496 324h27v3h-27zM499 327h27v3h-27zM505 330h21v3h-21zM505 333h21v3h-21zM508 336h18v3h-18zM508 339h18v3h-18zM511 342h15v3h-15zM511 345h15v3h-15zM511 348h15v3h-15zM514 351h12v3h-12zM514 354h12v3h-12zM514 357h12v3h-12zM514 360h12v3h-12zM514 363h12v3h-12zM517 366h9v3h-9zM553 366h3v3h-3zM517 369h9v3h-9zM517 372h6v3h-6zM517 375h6v3h-6zM517 378h6v3h-6zM517 381h6v3h-6zM565 381h3v3h-3zM517 384h6v3h-6zM565 384h3v3h-3zM517 387h6v3h-6zM520 390h6v3h-6zM562 390h3v3h-3zM520 393h9v3h-9zM559 393h3v3h-3zM523 396h6v3h-6zM526 399h9v3h-9zM529 402h9v3h-9zM535 405h12v3h-12zM544 408h6v3h-6z"/><path fill="#00c7ff" d="M391 123h18v3h-18zM394 126h18v3h-18zM397 129h18v3h-18zM400 132h15v3h-15zM403 135h15v3h-15zM406 138h15v3h-15zM406 141h15v3h-15zM409 144h12v3h-12zM409 147h15v3h-15zM412 150h12v3h-12zM415 153h12v3h-12zM415 156h15v3h-15zM418 159h12v3h-12zM418 162h15v3h-15zM421 165h12v3h-12zM424 168h12v3h-12zM424 171h12v3h-12zM427 174h12v3h-12zM430 177h12v3h-12zM430 180h15v3h-15zM433 183h18v3h-18zM436 186h18v3h-18zM442 189h18v3h-18zM445 192h18v3h-18zM448 195h18v3h-18zM451 198h18v3h-18zM451 201h18v3h-18zM454 204h15v3h-15zM457 207h12v3h-12zM457 210h15v3h-15zM460 213h12v3h-12zM463 216h9v3h-9zM463 219h9v3h-9zM466 222h6v3h-6zM466 225h6v3h-6zM469 228h3v3h-3zM469 231h3v3h-3zM466 234h6v3h-6zM466 237h6v3h-6zM466 240h6v3h-6zM466 243h6v3h-6zM466 246h6v3h-6zM466 249h6v3h-6zM466 252h6v3h-6zM466 255h6v3h-6zM466 258h6v3h-6zM466 261h6v3h-6zM466 264h6v3h-6zM466 267h6v3h-6zM466 270h6v3h-6zM466 273h6v3h-6zM466 276h6v3h-6zM466 279h9v3h-9zM526 279h21v3h-21zM466 282h12v3h-12zM526 282h21v3h-21zM469 285h12v3h-12zM523 285h24v3h-24zM469 288h15v3h-15zM523 288h24v3h-24zM472 291h15v3h-15zM520 291h27v3h-27zM475 294h18v3h-18zM517 294h30v3h-30zM481 297h15v3h-15zM511 297h36v3h-36zM484 300h15v3h-15zM505 300h42v3h-42zM487 303h63v3h-63zM490 306h60v3h-60zM493 309h57v3h-57zM499 312h51v3h-51zM505 315h45v3h-45zM514 318h36v3h-36zM520 321h30v3h-30zM523 324h27v3h-27zM526 327h24v3h-24zM526 330h24v3h-24zM526 333h24v3h-24zM526 336h24v3h-24zM526 339h21v3h-21zM526 342h18v3h-18zM526 345h18v3h-18zM526 348h18v3h-18zM526 351h15v3h-15zM526 354h15v3h-15zM526 357h12v3h-12zM526 360h9v3h-9zM526 363h9v3h-9zM550 363h3v3h-3zM526 366h6v3h-6zM526 369h6v3h-6zM523 372h6v3h-6zM523 375h6v3h-6zM523 378h6v3h-6zM523 381h6v3h-6zM523 384h6v3h-6zM523 387h6v3h-6zM526 390h3v3h-3zM529 393h3v3h-3zM529 396h6v3h-6zM535 399h3v3h-3zM550 399h3v3h-3zM538 402h9v3h-9zM547 405h3v3h-3z"/><path fill="#00d7ff" d="M409 123h21v3h-21zM412 126h18v3h-18zM415 129h15v3h-15zM415 132h15v3h-15zM418 135h15v3h-15zM421 138h12v3h-12zM421 141h12v3h-12zM421 144h12v3h-12zM424 147h9v3h-9zM424 150h12v3h-12zM427 153h9v3h-9zM430 156h6v3h-6zM430 159h9v3h-9zM433 162h9v3h-9zM433 165h9v3h-9zM436 168h9v3h-9zM436 171h12v3h-12zM439 174h12v3h-12zM442 177h15v3h-15zM445 180h15v3h-15zM451 183h15v3h-15zM454 186h15v3h-15zM460 189h12v3h-12zM463 192h9v3h-9zM466 195h6v3h-6zM469 198h3v3h-3zM469 201h3v3h-3zM469 204h3v3h-3zM469 207h3v3h-3zM472 210h3v3h-3zM472 213h3v3h-3zM472 216h3v3h-3zM472 219h3v3h-3zM472 222h3v3h-3zM472 225h3v3h-3zM472 228h6v3h-6zM472 231h6v3h-6zM472 234h6v3h-6zM472 237h6v3h-6zM472 240h6v3h-6zM472 243h6v3h-6zM472 246h6v3h-6zM472 249h6v3h-6zM472 252h6v3h-6zM472 255h9v3h-9zM472 258h9v3h-9zM472 261h9v3h-9zM472 264h9v3h-9zM472 267h9v3h-9zM472 270h12v3h-12zM472 273h12v3h-12zM472 276h15v3h-15zM520 276h27v3h-27zM475 279h15v3h-15zM511 279h15v3h-15zM478 282h15v3h-15zM508 282h18v3h-18zM481 285h15v3h-15zM505 285h18v3h-18zM484 288h39v3h-39zM487 291h33v3h-33zM493 294h24v3h-24zM496 297h15v3h-15zM499 300h6v3h-6zM547 339h3v3h-3zM544 342h6v3h-6zM544 345h6v3h-6zM544 348h6v3h-6zM541 351h9v3h-9zM541 354h9v3h-9zM538 357h12v3h-12zM535 360h9v3h-9zM535 363h6v3h-6zM532 366h6v3h-6zM532 369h3v3h-3zM529 372h6v3h-6zM529 375h3v3h-3zM529 378h3v3h-3zM529 381h3v3h-3zM529 384h3v3h-3zM529 387h3v3h-3zM529 390h3v3h-3zM532 393h3v3h-3zM535 396h3v3h-3zM553 396h3v3h-3zM538 399h6v3h-6zM547 402h3v3h-3z"/><path fill="#00e7ff" d="M430 123h6v3h-6zM430 126h9v3h-9zM430 129h9v3h-9zM430 132h9v3h-9zM433 135h6v3h-6zM433 138h6v3h-6zM433 141h6v3h-6zM433 144h6v3h-6zM433 147h9v3h-9zM436 150h6v3h-6zM436 153h6v3h-6zM436 156h9v3h-9zM439 159h9v3h-9zM442 162h9v3h-9zM442 165h12v3h-12zM445 168h12v3h-12zM448 171h12v3h-12zM451 174h12v3h-12zM457 177h12v3h-12zM460 180h12v3h-12zM466 183h6v3h-6zM469 186h3v3h-3zM472 189h3v3h-3zM472 192h3v3h-3zM472 195h3v3h-3zM472 198h3v3h-3zM472 201h3v3h-3zM472 204h3v3h-3zM472 207h3v3h-3zM475 210h3v3h-3zM475 213h3v3h-3zM475 216h3v3h-3zM475 219h3v3h-3zM475 222h3v3h-3zM475 225h6v3h-6zM478 228h3v3h-3zM478 231h3v3h-3zM478 234h3v3h-3zM478 237h3v3h-3zM478 240h6v3h-6zM478 243h6v3h-6zM478 246h6v3h-6zM478 249h6v3h-6zM478 252h6v3h-6zM481 255h6v3h-6zM481 258h6v3h-6zM481 261h6v3h-6zM481 264h9v3h-9zM481 267h12v3h-12zM484 270h9v3h-9zM484 273h12v3h-12zM511 273h36v3h-36zM487 276h33v3h-33zM490 279h21v3h-21zM493 282h15v3h-15zM496 285h9v3h-9zM544 360h6v3h-6zM541 363h3v3h-3zM538 366h3v3h-3zM535 369h3v3h-3zM556 369h3v3h-3zM532 375h3v3h-3zM562 375h3v3h-3zM532 387h3v3h-3zM532 390h3v3h-3zM535 393h3v3h-3zM538 396h3v3h-3z"/><path fill="#00f7ff" d="M436 123h9v3h-9zM439 126h6v3h-6zM439 129h6v3h-6zM439 132h6v3h-6zM439 135h6v3h-6zM439 138h9v3h-9zM439 141h9v3h-9zM439 144h9v3h-9zM442 147h6v3h-6zM442 150h6v3h-6zM442 153h9v3h-9zM445 156h9v3h-9zM448 159h9v3h-9zM451 162h9v3h-9zM454 165h9v3h-9zM457 168h9v3h-9zM460 171h9v3h-9zM463 174h9v3h-9zM469 177h3v3h-3zM472 183h3v3h-3zM472 186h3v3h-3zM475 192h3v3h-3zM475 195h3v3h-3zM475 198h3v3h-3zM475 201h3v3h-3zM475 204h3v3h-3zM475 207h3v3h-3zM478 210h3v3h-3zM478 213h3v3h-3zM478 216h3v3h-3zM478 219h3v3h-3zM478 222h6v3h-6zM481 225h3v3h-3zM481 228h3v3h-3zM481 231h3v3h-3zM481 234h6v3h-6zM481 237h6v3h-6zM484 240h3v3h-3zM484 243h3v3h-3zM484 246h6v3h-6zM484 249h6v3h-6zM484 252h6v3h-6zM487 255h6v3h-6zM487 258h6v3h-6zM487 261h9v3h-9zM490 264h9v3h-9zM493 267h15v3h-15zM493 270h54v3h-54zM496 273h15v3h-15zM544 363h3v3h-3zM535 372h3v3h-3zM559 372h3v3h-3zM532 378h3v3h-3zM532 381h3v3h-3zM532 384h3v3h-3zM544 399h6v3h-6z"/><path fill="#00fff7" d="M445 123h9v3h-9zM445 126h9v3h-9zM445 129h9v3h-9zM445 132h9v3h-9zM445 135h9v3h-9zM448 138h6v3h-6zM448 141h6v3h-6zM448 144h6v3h-6zM448 147h6v3h-6zM448 150h9v3h-9zM451 153h6v3h-6zM454 156h6v3h-6zM457 159h6v3h-6zM460 162h9v3h-9zM463 165h6v3h-6zM466 168h6v3h-6zM469 171h3v3h-3zM472 177h3v3h-3zM472 180h3v3h-3zM475 183h3v3h-3zM475 186h3v3h-3zM475 189h3v3h-3zM478 195h3v3h-3zM478 198h3v3h-3zM478 201h3v3h-3zM478 204h3v3h-3zM478 207h3v3h-3zM481 210h3v3h-3zM481 213h3v3h-3zM481 216h3v3h-3zM481 219h6v3h-6zM484 222h3v3h-3zM484 225h3v3h-3zM484 228h6v3h-6zM484 231h6v3h-6zM487 234h3v3h-3zM487 237h3v3h-3zM487 240h6v3h-6zM487 243h6v3h-6zM490 246h3v3h-3zM490 249h6v3h-6zM490 252h6v3h-6zM493 255h6v3h-6zM493 258h9v3h-9zM496 261h12v3h-12zM499 264h24v3h-24zM508 267h39v3h-39zM547 363h3v3h-3zM541 366h3v3h-3zM550 366h3v3h-3zM538 369h3v3h-3zM535 375h3v3h-3zM562 387h3v3h-3zM535 390h3v3h-3zM538 393h3v3h-3zM556 393h3v3h-3zM541 396h3v3h-3z"/><path fill="#00ffe7" d="M454 123h6v3h-6zM454 126h6v3h-6zM454 129h6v3h-6zM454 132h6v3h-6zM454 135h6v3h-6zM454 138h6v3h-6zM454 141h6v3h-6zM454 144h9v3h-9zM454 147h9v3h-9zM457 150h6v3h-6zM457 153h9v3h-9zM460 156h9v3h-9zM463 159h9v3h-9zM469 162h3v3h-3zM469 165h3v3h-3zM472 171h3v3h-3zM472 174h3v3h-3zM475 177h3v3h-3zM475 180h3v3h-3zM478 186h3v3h-3zM478 189h3v3h-3zM478 192h3v3h-3zM481 195h3v3h-3zM481 198h3v3h-3zM481 201h3v3h-3zM481 204h3v3h-3zM481 207h3v3h-3zM484 210h3v3h-3zM484 213h3v3h-3zM484 216h3v3h-3zM487 219h3v3h-3zM487 222h3v3h-3zM487 225h3v3h-3zM490 228h3v3h-3zM490 231h3v3h-3zM490 234h6v3h-6zM490 237h6v3h-6zM493 240h3v3h-3zM493 243h6v3h-6zM493 246h6v3h-6zM496 249h6v3h-6zM496 252h9v3h-9zM499 255h9v3h-9zM502 258h15v3h-15zM508 261h18v3h-18zM523 264h24v3h-24zM544 366h3v3h-3zM553 369h3v3h-3zM535 378h3v3h-3zM535 387h3v3h-3zM550 396h3v3h-3z"/><path fill="#00ffd7" d="M460 123h9v3h-9zM460 126h9v3h-9zM460 129h9v3h-9zM460 132h9v3h-9zM460 135h9v3h-9zM460 138h9v3h-9zM460 141h9v3h-9zM463 144h6v3h-6zM463 147h6v3h-6zM463 150h6v3h-6zM466 153h6v3h-6zM469 156h3v3h-3zM472 162h3v3h-3zM472 165h3v3h-3zM472 168h3v3h-3zM475 171h3v3h-3zM475 174h3v3h-3zM478 180h3v3h-3zM478 183h3v3h-3zM481 186h3v3h-3zM481 189h3v3h-3zM481 192h3v3h-3zM484 198h3v3h-3zM484 201h3v3h-3zM484 204h3v3h-3zM484 207h3v3h-3zM487 210h3v3h-3zM487 213h3v3h-3zM487 216h3v3h-3zM490 219h3v3h-3zM490 222h3v3h-3zM490 225h6v3h-6zM493 228h3v3h-3zM493 231h6v3h-6zM496 234h3v3h-3zM496 237h3v3h-3zM496 240h6v3h-6zM499 243h6v3h-6zM499 246h6v3h-6zM502 249h6v3h-6zM505 252h9v3h-9zM508 255h12v3h-12zM517 258h12v3h-12zM526 261h21v3h-21zM541 369h3v3h-3zM538 372h3v3h-3zM562 378h3v3h-3zM535 381h3v3h-3zM535 384h3v3h-3zM559 390h3v3h-3zM544 396h3v3h-3z"/><path fill="#00ffc7" d="M469 123h3v3h-3zM469 126h3v3h-3zM469 129h3v3h-3zM469 132h3v3h-3zM469 135h3v3h-3zM469 138h3v3h-3zM469 141h3v3h-3zM469 144h3v3h-3zM469 147h3v3h-3zM469 150h3v3h-3zM472 156h3v3h-3zM472 159h3v3h-3zM475 165h3v3h-3zM475 168h3v3h-3zM478 174h3v3h-3zM478 177h3v3h-3zM481 183h3v3h-3zM484 189h3v3h-3zM484 192h3v3h-3zM484 195h3v3h-3zM487 198h3v3h-3zM487 201h3v3h-3zM487 204h3v3h-3zM487 207h3v3h-3zM490 210h3v3h-3zM490 213h3v3h-3zM490 216h6v3h-6zM493 219h3v3h-3zM493 222h3v3h-3zM496 225h3v3h-3zM496 228h3v3h-3zM499 231h3v3h-3zM499 234h3v3h-3zM499 237h6v3h-6zM502 240h6v3h-6zM505 243h3v3h-3zM505 246h6v3h-6zM508 249h9v3h-9zM514 252h9v3h-9zM520 255h9v3h-9zM529 258h15v3h-15zM547 366h3v3h-3zM562 384h3v3h-3zM538 390h3v3h-3zM541 393h3v3h-3z"/><path fill="#00ffa7" d="M472 123h3v3h-3zM472 126h3v3h-3zM472 129h3v3h-3zM472 132h3v3h-3zM472 135h3v3h-3zM472 138h3v3h-3zM472 141h3v3h-3zM472 144h3v3h-3zM472 147h3v3h-3zM475 153h3v3h-3zM475 156h3v3h-3zM478 162h3v3h-3zM478 165h3v3h-3zM481 171h3v3h-3zM481 174h3v3h-3zM484 177h3v3h-3zM484 180h3v3h-3zM487 186h3v3h-3zM490 192h3v3h-3zM490 195h3v3h-3zM490 198h3v3h-3zM493 201h3v3h-3zM493 204h3v3h-3zM493 207h3v3h-3zM496 210h3v3h-3zM496 213h3v3h-3zM499 216h3v3h-3zM499 219h3v3h-3zM502 222h3v3h-3zM502 225h3v3h-3zM505 228h3v3h-3zM505 231h3v3h-3zM508 234h3v3h-3zM508 237h6v3h-6zM511 240h6v3h-6zM514 243h6v3h-6zM520 246h6v3h-6zM523 249h9v3h-9zM532 252h12v3h-12zM544 255h3v3h-3zM556 372h3v3h-3zM538 375h3v3h-3z"/><path fill="#00ff87" d="M475 123h3v3h-3zM475 126h3v3h-3zM475 129h3v3h-3zM475 132h3v3h-3zM475 135h3v3h-3zM478 153h3v3h-3zM481 159h3v3h-3zM481 162h3v3h-3zM484 168h3v3h-3zM484 171h3v3h-3zM487 174h3v3h-3zM487 177h3v3h-3zM490 180h3v3h-3zM490 183h3v3h-3zM493 186h3v3h-3zM493 189h3v3h-3zM496 195h3v3h-3zM496 198h3v3h-3zM499 204h3v3h-3zM499 207h3v3h-3zM502 210h3v3h-3zM502 213h3v3h-3zM505 219h3v3h-3zM508 222h3v3h-3zM508 225h3v3h-3zM511 228h3v3h-3zM514 231h3v3h-3zM517 234h3v3h-3zM517 237h6v3h-6zM523 240h3v3h-3zM526 243h6v3h-6zM532 246h9v3h-9zM544 249h3v3h-3zM538 378h3v3h-3zM538 384h3v3h-3zM544 393h3v3h-3z"/><path fill="#00ff67" d="M478 123h3v3h-3zM478 126h3v3h-3zM481 147h3v3h-3zM481 150h3v3h-3zM481 153h3v3h-3zM484 159h3v3h-3zM487 165h3v3h-3zM487 168h3v3h-3zM490 171h3v3h-3zM490 174h3v3h-3zM493 177h3v3h-3zM493 180h3v3h-3zM496 183h3v3h-3zM496 186h3v3h-3zM499 189h3v3h-3zM499 192h3v3h-3zM502 198h3v3h-3zM502 201h3v3h-3zM505 207h3v3h-3zM505 210h3v3h-3zM508 213h3v3h-3zM508 216h3v3h-3zM511 219h3v3h-3zM514 222h3v3h-3zM514 225h6v3h-6zM517 228h6v3h-6zM520 231h6v3h-6zM523 234h6v3h-6zM526 237h9v3h-9zM532 240h9v3h-9zM541 243h6v3h-6zM550 393h3v3h-3z"/><path fill="#00ff47" d="M481 123h3v3h-3zM484 141h3v3h-3zM484 144h3v3h-3zM484 147h3v3h-3zM484 150h3v3h-3zM487 156h3v3h-3zM490 162h3v3h-3zM490 165h3v3h-3zM493 168h3v3h-3zM493 171h3v3h-3zM496 174h3v3h-3zM496 177h3v3h-3zM499 180h3v3h-3zM499 183h3v3h-3zM502 189h3v3h-3zM505 195h3v3h-3zM505 198h3v3h-3zM508 204h3v3h-3zM511 210h3v3h-3zM514 216h3v3h-3zM517 219h3v3h-3zM520 222h3v3h-3zM523 225h3v3h-3zM526 228h3v3h-3zM529 231h6v3h-6zM535 234h6v3h-6zM541 237h6v3h-6zM544 372h3v3h-3zM541 375h3v3h-3zM559 378h3v3h-3z"/><path fill="#00ff27" d="M484 123h3v3h-3zM487 138h3v3h-3zM487 141h3v3h-3zM487 144h3v3h-3zM487 147h3v3h-3zM490 153h3v3h-3zM490 156h3v3h-3zM493 159h3v3h-3zM493 162h3v3h-3zM496 168h3v3h-3zM499 174h3v3h-3zM502 180h3v3h-3zM505 186h3v3h-3zM505 189h3v3h-3zM508 195h3v3h-3zM511 201h3v3h-3zM514 207h3v3h-3zM517 213h3v3h-3zM520 216h3v3h-3zM523 219h3v3h-3zM526 222h3v3h-3zM529 225h6v3h-6zM535 228h6v3h-6zM541 231h6v3h-6zM559 384h3v3h-3z"/><path fill="#00ff17" d="M487 123h3v3h-3zM487 126h3v3h-3zM487 129h3v3h-3zM487 132h3v3h-3zM487 135h3v3h-3zM490 147h3v3h-3zM490 150h3v3h-3zM493 156h3v3h-3zM496 162h3v3h-3zM496 165h3v3h-3zM499 168h3v3h-3zM499 171h3v3h-3zM502 177h3v3h-3zM505 183h3v3h-3zM508 189h3v3h-3zM508 192h3v3h-3zM511 198h3v3h-3zM514 204h3v3h-3zM517 207h3v3h-3zM517 210h3v3h-3zM520 213h3v3h-3zM523 216h3v3h-3zM526 219h3v3h-3zM529 222h3v3h-3zM535 225h6v3h-6zM541 228h6v3h-6zM556 375h3v3h-3zM541 378h3v3h-3zM559 381h3v3h-3zM544 390h3v3h-3zM553 390h3v3h-3z"/><path fill="#07ff00" d="M490 123h3v3h-3zM490 126h3v3h-3zM490 129h3v3h-3zM490 132h3v3h-3zM493 141h3v3h-3zM493 144h3v3h-3zM493 147h3v3h-3zM496 153h3v3h-3zM496 156h3v3h-3zM499 159h3v3h-3zM499 162h3v3h-3zM502 168h3v3h-3zM505 174h3v3h-3zM505 177h3v3h-3zM508 180h3v3h-3zM508 183h3v3h-3zM511 189h3v3h-3zM514 195h3v3h-3zM517 201h3v3h-3zM520 204h3v3h-3zM520 207h3v3h-3zM523 210h3v3h-3zM526 213h3v3h-3zM529 216h3v3h-3zM532 219h6v3h-6zM541 222h6v3h-6zM547 372h3v3h-3zM541 381h3v3h-3zM556 387h3v3h-3z"/><path fill="#27ff00" d="M493 123h3v3h-3zM493 126h3v3h-3zM493 129h3v3h-3zM496 141h3v3h-3zM496 144h3v3h-3zM496 147h3v3h-3zM499 153h3v3h-3zM502 159h3v3h-3zM505 165h3v3h-3zM505 168h3v3h-3zM508 174h3v3h-3zM511 180h3v3h-3zM514 186h3v3h-3zM514 189h3v3h-3zM517 192h3v3h-3zM517 195h3v3h-3zM520 198h3v3h-3zM523 204h3v3h-3zM526 207h3v3h-3zM529 210h3v3h-3zM532 213h6v3h-6zM538 216h6v3h-6zM544 219h3v3h-3zM544 375h3v3h-3zM550 390h3v3h-3z"/><path fill="#47ff00" d="M496 123h3v3h-3zM496 126h3v3h-3zM499 138h3v3h-3zM499 141h3v3h-3zM499 144h3v3h-3zM502 150h3v3h-3zM502 153h3v3h-3zM505 159h3v3h-3zM508 165h3v3h-3zM511 171h3v3h-3zM511 174h3v3h-3zM514 180h3v3h-3zM517 186h3v3h-3zM520 192h3v3h-3zM523 198h3v3h-3zM526 201h3v3h-3zM529 204h3v3h-3zM532 207h6v3h-6zM538 210h6v3h-6zM544 213h3v3h-3zM553 375h3v3h-3zM544 387h3v3h-3z"/><path fill="#67ff00" d="M499 123h3v3h-3zM499 126h3v3h-3zM502 135h3v3h-3zM502 138h3v3h-3zM502 141h3v3h-3zM505 150h3v3h-3zM508 156h3v3h-3zM508 159h3v3h-3zM511 165h3v3h-3zM514 171h3v3h-3zM517 177h3v3h-3zM520 183h3v3h-3zM520 186h3v3h-3zM523 192h3v3h-3zM526 195h3v3h-3zM529 198h3v3h-3zM532 201h3v3h-3zM535 204h6v3h-6zM541 207h6v3h-6z"/><path fill="#87ff00" d="M502 123h3v3h-3zM505 132h3v3h-3zM505 135h3v3h-3zM505 138h3v3h-3zM508 147h3v3h-3zM508 150h3v3h-3zM511 156h3v3h-3zM514 162h3v3h-3zM514 165h3v3h-3zM517 168h3v3h-3zM517 171h3v3h-3zM520 177h3v3h-3zM523 183h3v3h-3zM526 189h3v3h-3zM529 195h6v3h-6zM535 198h6v3h-6zM541 201h6v3h-6zM556 381h3v3h-3z"/><path fill="#97ff00" d="M505 123h3v3h-3zM505 126h3v3h-3zM505 129h3v3h-3zM508 138h3v3h-3zM508 141h3v3h-3zM508 144h3v3h-3zM511 153h3v3h-3zM514 159h3v3h-3zM517 165h3v3h-3zM520 171h3v3h-3zM520 174h3v3h-3zM523 180h3v3h-3zM526 186h3v3h-3zM529 192h6v3h-6zM535 195h6v3h-6zM541 198h3v3h-3zM547 375h6v3h-6zM544 384h3v3h-3z"/><path fill="#b7ff00" d="M508 123h3v3h-3zM508 126h3v3h-3zM511 138h3v3h-3zM511 141h3v3h-3zM514 150h3v3h-3zM514 153h3v3h-3zM517 156h3v3h-3zM517 159h3v3h-3zM520 165h3v3h-3zM523 171h3v3h-3zM526 177h3v3h-3zM526 180h3v3h-3zM529 183h3v3h-3zM532 186h3v3h-3zM535 189h3v3h-3zM538 192h6v3h-6zM544 195h3v3h-3z"/><path fill="#d7ff00" d="M511 123h3v3h-3zM511 126h3v3h-3zM514 135h3v3h-3zM514 138h3v3h-3zM514 141h3v3h-3zM517 150h3v3h-3zM520 156h3v3h-3zM523 162h3v3h-3zM523 165h3v3h-3zM526 171h3v3h-3zM529 177h6v3h-6zM532 180h6v3h-6zM535 183h6v3h-6zM541 186h3v3h-3zM544 189h3v3h-3zM553 378h3v3h-3z"/><path fill="#f7ff00" d="M514 123h3v3h-3zM517 132h3v3h-3zM517 135h3v3h-3zM517 138h3v3h-3zM520 147h3v3h-3zM520 150h3v3h-3zM523 156h3v3h-3zM526 162h3v3h-3zM529 168h3v3h-3zM532 171h6v3h-6zM535 174h6v3h-6zM538 177h6v3h-6zM541 180h6v3h-6z"/><path fill="#fff700" d="M517 123h3v3h-3zM517 126h3v3h-3zM517 129h3v3h-3zM520 138h3v3h-3zM520 141h3v3h-3zM520 144h3v3h-3zM523 150h3v3h-3zM523 153h3v3h-3zM526 159h3v3h-3zM529 165h6v3h-6zM532 168h6v3h-6zM538 171h3v3h-3zM541 174h3v3h-3zM544 177h3v3h-3zM547 378h3v3h-3zM553 381h3v3h-3z"/><path fill="#ffd700" d="M520 123h3v3h-3zM520 126h3v3h-3zM523 135h3v3h-3zM523 138h3v3h-3zM523 141h3v3h-3zM526 150h3v3h-3zM529 156h3v3h-3zM532 159h6v3h-6zM535 162h6v3h-6zM541 165h3v3h-3zM544 168h3v3h-3zM547 384h3v3h-3z"/><path fill="#ffb700" d="M523 123h3v3h-3zM526 132h3v3h-3zM526 135h3v3h-3zM526 138h3v3h-3zM529 147h3v3h-3zM529 150h6v3h-6zM535 153h6v3h-6zM538 156h6v3h-6zM544 159h3v3h-3zM547 381h3v3h-3z"/><path fill="#ff9700" d="M526 123h3v3h-3zM529 129h3v3h-3zM529 132h3v3h-3zM529 135h6v3h-6zM532 138h6v3h-6zM532 141h6v3h-6zM535 144h6v3h-6zM538 147h6v3h-6zM541 150h6v3h-6z"/><path fill="#ff8700" d="M529 123h3v3h-3zM529 126h3v3h-3zM532 129h3v3h-3zM532 132h6v3h-6zM535 135h3v3h-3zM538 138h3v3h-3zM538 141h6v3h-6zM541 144h6v3h-6zM544 147h3v3h-3z"/><path fill="#ff7700" d="M532 123h3v3h-3zM532 126h6v3h-6zM535 129h6v3h-6zM538 132h3v3h-3zM538 135h6v3h-6zM541 138h6v3h-6zM544 141h3v3h-3z"/><path fill="#ff6700" d="M535 123h6v3h-6zM538 126h3v3h-3zM541 129h3v3h-3zM541 132h6v3h-6zM544 135h3v3h-3z"/><path fill="#ff5700" d="M541 123h3v3h-3zM541 126h6v3h-6zM544 129h3v3h-3z"/><path fill="#ff4700" d="M544 123h3v3h-3z"/><path fill="#00ff57" d="M481 126h3v3h-3zM481 129h3v3h-3zM481 132h3v3h-3zM481 135h3v3h-3zM481 138h3v3h-3zM481 141h3v3h-3zM481 144h3v3h-3zM484 153h3v3h-3zM484 156h3v3h-3zM487 159h3v3h-3zM487 162h3v3h-3zM490 168h3v3h-3zM493 174h3v3h-3zM496 180h3v3h-3zM499 186h3v3h-3zM502 192h3v3h-3zM502 195h3v3h-3zM505 201h3v3h-3zM505 204h3v3h-3zM508 207h3v3h-3zM508 210h3v3h-3zM511 213h3v3h-3zM511 216h3v3h-3zM514 219h3v3h-3zM517 222h3v3h-3zM520 225h3v3h-3zM523 228h3v3h-3zM526 231h3v3h-3zM529 234h6v3h-6zM535 237h6v3h-6zM541 240h6v3h-6zM553 372h3v3h-3zM547 393h3v3h-3z"/><path fill="#00ff37" d="M484 126h3v3h-3zM484 129h3v3h-3zM484 132h3v3h-3zM484 135h3v3h-3zM484 138h3v3h-3zM487 150h3v3h-3zM487 153h3v3h-3zM490 159h3v3h-3zM493 165h3v3h-3zM496 171h3v3h-3zM499 177h3v3h-3zM502 183h3v3h-3zM502 186h3v3h-3zM505 192h3v3h-3zM508 198h3v3h-3zM508 201h3v3h-3zM511 204h3v3h-3zM511 207h3v3h-3zM514 210h3v3h-3zM514 213h3v3h-3zM517 216h3v3h-3zM520 219h3v3h-3zM523 222h3v3h-3zM526 225h3v3h-3zM529 228h6v3h-6zM535 231h6v3h-6zM541 234h6v3h-6zM541 387h3v3h-3z"/><path fill="#77ff00" d="M502 126h3v3h-3zM502 129h3v3h-3zM502 132h3v3h-3zM505 141h3v3h-3zM505 144h3v3h-3zM505 147h3v3h-3zM508 153h3v3h-3zM511 159h3v3h-3zM511 162h3v3h-3zM514 168h3v3h-3zM517 174h3v3h-3zM520 180h3v3h-3zM523 186h3v3h-3zM523 189h3v3h-3zM526 192h3v3h-3zM532 198h3v3h-3zM535 201h6v3h-6zM541 204h6v3h-6zM544 378h3v3h-3zM556 384h3v3h-3zM553 387h3v3h-3z"/><path fill="#e7ff00" d="M514 126h3v3h-3zM514 129h3v3h-3zM514 132h3v3h-3zM517 141h3v3h-3zM517 144h3v3h-3zM517 147h3v3h-3zM520 153h3v3h-3zM523 159h3v3h-3zM526 165h3v3h-3zM526 168h3v3h-3zM529 171h3v3h-3zM529 174h6v3h-6zM535 177h3v3h-3zM538 180h3v3h-3zM541 183h6v3h-6zM544 186h3v3h-3zM553 384h3v3h-3z"/><path fill="#ffc700" d="M523 126h3v3h-3zM523 129h3v3h-3zM523 132h3v3h-3zM526 141h3v3h-3zM526 144h3v3h-3zM526 147h3v3h-3zM529 153h6v3h-6zM532 156h6v3h-6zM538 159h6v3h-6zM541 162h6v3h-6zM544 165h3v3h-3zM550 384h3v3h-3z"/><path fill="#ffa700" d="M526 126h3v3h-3zM526 129h3v3h-3zM529 138h3v3h-3zM529 141h3v3h-3zM529 144h6v3h-6zM532 147h6v3h-6zM535 150h6v3h-6zM541 153h6v3h-6zM544 156h3v3h-3zM550 381h3v3h-3z"/><path fill="#00ff77" d="M478 129h3v3h-3zM478 132h3v3h-3zM478 135h3v3h-3zM478 138h3v3h-3zM478 141h3v3h-3zM478 144h3v3h-3zM478 147h3v3h-3zM478 150h3v3h-3zM481 156h3v3h-3zM484 162h3v3h-3zM484 165h3v3h-3zM487 171h3v3h-3zM490 177h3v3h-3zM493 183h3v3h-3zM496 189h3v3h-3zM496 192h3v3h-3zM499 195h3v3h-3zM499 198h3v3h-3zM499 201h3v3h-3zM502 204h3v3h-3zM502 207h3v3h-3zM505 213h3v3h-3zM505 216h3v3h-3zM508 219h3v3h-3zM511 222h3v3h-3zM511 225h3v3h-3zM514 228h3v3h-3zM517 231h3v3h-3zM520 234h3v3h-3zM523 237h3v3h-3zM526 240h6v3h-6zM532 243h9v3h-9zM541 246h6v3h-6zM547 369h3v3h-3zM538 381h3v3h-3zM559 387h3v3h-3zM541 390h3v3h-3zM556 390h3v3h-3z"/><path fill="#37ff00" d="M496 129h3v3h-3zM496 132h3v3h-3zM496 135h3v3h-3zM496 138h3v3h-3zM499 147h3v3h-3zM499 150h3v3h-3zM502 156h3v3h-3zM505 162h3v3h-3zM508 168h3v3h-3zM508 171h3v3h-3zM511 177h3v3h-3zM514 183h3v3h-3zM517 189h3v3h-3zM520 195h3v3h-3zM523 201h3v3h-3zM526 204h3v3h-3zM529 207h3v3h-3zM532 210h6v3h-6zM538 213h6v3h-6zM544 216h3v3h-3zM547 390h3v3h-3z"/><path fill="#57ff00" d="M499 129h3v3h-3zM499 132h3v3h-3zM499 135h3v3h-3zM502 144h3v3h-3zM502 147h3v3h-3zM505 153h3v3h-3zM505 156h3v3h-3zM508 162h3v3h-3zM511 168h3v3h-3zM514 174h3v3h-3zM514 177h3v3h-3zM517 180h3v3h-3zM517 183h3v3h-3zM520 189h3v3h-3zM523 195h3v3h-3zM526 198h3v3h-3zM529 201h3v3h-3zM532 204h3v3h-3zM538 207h3v3h-3zM544 210h3v3h-3zM556 378h3v3h-3z"/><path fill="#a7ff00" d="M508 129h3v3h-3zM508 132h3v3h-3zM508 135h3v3h-3zM511 144h3v3h-3zM511 147h3v3h-3zM511 150h3v3h-3zM514 156h3v3h-3zM517 162h3v3h-3zM520 168h3v3h-3zM523 174h3v3h-3zM523 177h3v3h-3zM526 183h3v3h-3zM529 186h3v3h-3zM529 189h6v3h-6zM535 192h3v3h-3zM541 195h3v3h-3zM544 198h3v3h-3zM544 381h3v3h-3z"/><path fill="#c7ff00" d="M511 129h3v3h-3zM511 132h3v3h-3zM511 135h3v3h-3zM514 144h3v3h-3zM514 147h3v3h-3zM517 153h3v3h-3zM520 159h3v3h-3zM520 162h3v3h-3zM523 168h3v3h-3zM526 174h3v3h-3zM529 180h3v3h-3zM532 183h3v3h-3zM535 186h6v3h-6zM538 189h6v3h-6zM544 192h3v3h-3zM547 387h6v3h-6z"/><path fill="#ffe700" d="M520 129h3v3h-3zM520 132h3v3h-3zM520 135h3v3h-3zM523 144h3v3h-3zM523 147h3v3h-3zM526 153h3v3h-3zM526 156h3v3h-3zM529 159h3v3h-3zM529 162h6v3h-6zM535 165h6v3h-6zM538 168h6v3h-6zM541 171h6v3h-6zM544 174h3v3h-3zM550 378h3v3h-3z"/><path fill="#17ff00" d="M493 132h3v3h-3zM493 135h3v3h-3zM493 138h3v3h-3zM496 150h3v3h-3zM499 156h3v3h-3zM502 162h3v3h-3zM502 165h3v3h-3zM505 171h3v3h-3zM508 177h3v3h-3zM511 183h3v3h-3zM511 186h3v3h-3zM514 192h3v3h-3zM517 198h3v3h-3zM520 201h3v3h-3zM523 207h3v3h-3zM526 210h3v3h-3zM529 213h3v3h-3zM532 216h6v3h-6zM538 219h6v3h-6z"/><path fill="#00ff07" d="M490 135h3v3h-3zM490 138h3v3h-3zM490 141h3v3h-3zM490 144h3v3h-3zM493 150h3v3h-3zM493 153h3v3h-3zM496 159h3v3h-3zM499 165h3v3h-3zM502 171h3v3h-3zM502 174h3v3h-3zM505 180h3v3h-3zM508 186h3v3h-3zM511 192h3v3h-3zM511 195h3v3h-3zM514 198h3v3h-3zM514 201h3v3h-3zM517 204h3v3h-3zM520 210h3v3h-3zM523 213h3v3h-3zM526 216h3v3h-3zM529 219h3v3h-3zM532 222h9v3h-9zM541 225h6v3h-6zM550 372h3v3h-3zM541 384h3v3h-3z"/><path fill="#00ff97" d="M475 138h3v3h-3zM475 141h3v3h-3zM475 144h3v3h-3zM475 147h3v3h-3zM475 150h3v3h-3zM478 156h3v3h-3zM478 159h3v3h-3zM481 165h3v3h-3zM481 168h3v3h-3zM484 174h3v3h-3zM487 180h3v3h-3zM487 183h3v3h-3zM490 186h3v3h-3zM490 189h3v3h-3zM493 192h3v3h-3zM493 195h3v3h-3zM493 198h3v3h-3zM496 201h3v3h-3zM496 204h3v3h-3zM496 207h3v3h-3zM499 210h3v3h-3zM499 213h3v3h-3zM502 216h3v3h-3zM502 219h3v3h-3zM505 222h3v3h-3zM505 225h3v3h-3zM508 228h3v3h-3zM508 231h6v3h-6zM511 234h6v3h-6zM514 237h3v3h-3zM517 240h6v3h-6zM520 243h6v3h-6zM526 246h6v3h-6zM532 249h12v3h-12zM544 252h3v3h-3zM544 369h3v3h-3zM550 369h3v3h-3zM541 372h3v3h-3zM559 375h3v3h-3zM538 387h3v3h-3z"/><path fill="#00ffb7" d="M472 150h3v3h-3zM472 153h3v3h-3zM475 159h3v3h-3zM475 162h3v3h-3zM478 168h3v3h-3zM478 171h3v3h-3zM481 177h3v3h-3zM481 180h3v3h-3zM484 183h3v3h-3zM484 186h3v3h-3zM487 189h3v3h-3zM487 192h3v3h-3zM487 195h3v3h-3zM490 201h3v3h-3zM490 204h3v3h-3zM490 207h3v3h-3zM493 210h3v3h-3zM493 213h3v3h-3zM496 216h3v3h-3zM496 219h3v3h-3zM496 222h6v3h-6zM499 225h3v3h-3zM499 228h6v3h-6zM502 231h3v3h-3zM502 234h6v3h-6zM505 237h3v3h-3zM508 240h3v3h-3zM508 243h6v3h-6zM511 246h9v3h-9zM517 249h6v3h-6zM523 252h9v3h-9zM529 255h15v3h-15zM544 258h3v3h-3zM562 381h3v3h-3zM553 393h3v3h-3zM547 396h3v3h-3z"/><path fill="#0027ff" d="M127 300h3v3h-3zM127 303h6v3h-6zM556 303h3v3h-3zM127 306h9v3h-9zM556 306h3v3h-3zM127 309h12v3h-12zM556 309h3v3h-3zM127 312h15v3h-15zM556 312h3v3h-3zM127 315h18v3h-18zM556 315h3v3h-3zM127 318h21v3h-21zM556 318h3v3h-3zM127 321h24v3h-24zM556 321h3v3h-3zM127 324h27v3h-27zM556 324h3v3h-3zM127 327h30v3h-30zM556 327h3v3h-3zM127 330h39v3h-39zM556 330h3v3h-3zM127 333h48v3h-48zM556 333h3v3h-3zM127 336h54v3h-54zM556 336h3v3h-3zM127 339h60v3h-60zM556 339h3v3h-3zM127 342h63v3h-63zM556 342h3v3h-3zM127 345h69v3h-69zM556 345h3v3h-3zM127 348h75v3h-75zM556 348h3v3h-3zM127 351h81v3h-81zM556 351h3v3h-3zM127 354h87v3h-87zM556 354h3v3h-3zM127 357h90v3h-90zM127 360h96v3h-96zM559 360h3v3h-3zM127 363h102v3h-102zM562 363h3v3h-3zM127 366h105v3h-105zM565 366h3v3h-3zM127 369h108v3h-108zM568 369h3v3h-3zM127 372h114v3h-114zM127 375h117v3h-117zM571 375h3v3h-3zM127 378h123v3h-123zM571 378h3v3h-3zM127 381h132v3h-132zM127 384h144v3h-144zM127 387h159v3h-159zM571 387h3v3h-3zM127 390h174v3h-174zM571 390h3v3h-3zM127 393h180v3h-180zM568 393h3v3h-3zM127 396h183v3h-183zM127 399h189v3h-189zM562 399h3v3h-3zM127 402h195v3h-195zM559 402h3v3h-3zM127 405h198v3h-198zM556 405h3v3h-3zM127 408h204v3h-204zM556 408h3v3h-3zM127 411h207v3h-207zM556 411h3v3h-3zM139 414h201v3h-201zM556 414h3v3h-3zM154 417h189v3h-189zM556 417h3v3h-3zM166 420h183v3h-183zM556 420h3v3h-3zM181 423h171v3h-171zM187 426h168v3h-168zM196 429h162v3h-162zM205 432h156v3h-156zM553 432h3v3h-3zM214 435h150v3h-150zM553 435h3v3h-3zM223 438h147v3h-147zM553 438h3v3h-3zM229 441h144v3h-144zM553 441h3v3h-3zM235 444h141v3h-141zM553 444h3v3h-3zM241 447h138v3h-138zM553 447h3v3h-3zM247 450h135v3h-135zM553 450h3v3h-3zM253 453h135v3h-135zM553 453h3v3h-3zM259 456h135v3h-135zM553 456h3v3h-3zM268 459h132v3h-132zM277 462h129v3h-129zM283 465h129v3h-129zM292 468h126v3h-126zM301 471h126v3h-126zM307 474h126v3h-126zM316 477h120v3h-120zM322 480h117v3h-117zM550 480h3v3h-3zM331 483h114v3h-114zM550 483h3v3h-3zM337 486h111v3h-111zM550 486h3v3h-3zM343 489h108v3h-108zM550 489h3v3h-3zM352 492h105v3h-105zM550 492h3v3h-3zM358 495h102v3h-102zM550 495h3v3h-3zM367 498h99v3h-99zM550 498h3v3h-3zM373 501h96v3h-96zM550 501h3v3h-3zM382 504h90v3h-90zM550 504h3v3h-3zM391 507h84v3h-84zM550 507h3v3h-3z"/><path fill="#0017ff" d="M559 303h6v3h-6zM559 306h6v3h-6zM559 309h6v3h-6zM559 312h6v3h-6zM559 315h6v3h-6zM559 318h6v3h-6zM559 321h6v3h-6zM559 324h6v3h-6zM559 327h6v3h-6zM559 330h6v3h-6zM559 333h6v3h-6zM559 336h6v3h-6zM559 339h6v3h-6zM559 342h6v3h-6zM559 345h6v3h-6zM559 348h6v3h-6zM559 351h6v3h-6zM559 354h9v3h-9zM559 357h9v3h-9zM562 360h9v3h-9zM565 363h6v3h-6zM568 366h6v3h-6zM571 369h6v3h-6zM571 372h6v3h-6zM574 375h3v3h-3zM574 378h6v3h-6zM574 381h6v3h-6zM574 384h6v3h-6zM574 387h3v3h-3zM574 390h3v3h-3zM571 393h6v3h-6zM568 396h6v3h-6zM565 399h9v3h-9zM562 402h9v3h-9zM559 405h9v3h-9zM559 408h6v3h-6zM559 411h6v3h-6zM127 414h12v3h-12zM559 414h6v3h-6zM127 417h27v3h-27zM559 417h6v3h-6zM127 420h39v3h-39zM559 420h6v3h-6zM127 423h54v3h-54zM556 423h9v3h-9zM127 426h60v3h-60zM556 426h9v3h-9zM127 429h69v3h-69zM556 429h9v3h-9zM127 432h78v3h-78zM556 432h6v3h-6zM127 435h87v3h-87zM556 435h6v3h-6zM127 438h96v3h-96zM556 438h6v3h-6zM127 441h102v3h-102zM556 441h6v3h-6zM127 444h108v3h-108zM556 444h6v3h-6zM127 447h114v3h-114zM556 447h6v3h-6zM127 450h120v3h-120zM556 450h6v3h-6zM127 453h126v3h-126zM556 453h6v3h-6zM127 456h132v3h-132zM556 456h6v3h-6zM127 459h141v3h-141zM553 459h9v3h-9zM127 462h150v3h-150zM553 462h9v3h-9zM127 465h156v3h-156zM553 465h9v3h-9zM127 468h165v3h-165zM553 468h9v3h-9zM127 471h174v3h-174zM553 471h9v3h-9zM127 474h180v3h-180zM553 474h9v3h-9zM127 477h189v3h-189zM553 477h9v3h-9zM127 480h195v3h-195zM553 480h6v3h-6zM127 483h204v3h-204zM553 483h6v3h-6zM127 486h210v3h-210zM553 486h6v3h-6zM127 489h216v3h-216zM553 489h6v3h-6zM127 492h225v3h-225zM553 492h6v3h-6zM127 495h231v3h-231zM553 495h6v3h-6zM127 498h240v3h-240zM553 498h6v3h-6zM127 501h246v3h-246zM553 501h6v3h-6zM142 504h240v3h-240zM553 504h6v3h-6zM190 507h201v3h-201zM553 507h6v3h-6z"/><path fill="#0007ff" d="M565 303h390v3h-390zM565 306h390v3h-390zM565 309h390v3h-390zM565 312h390v3h-390zM565 315h390v3h-390zM565 318h390v3h-390zM565 321h390v3h-390zM565 324h390v3h-390zM565 327h390v3h-390zM565 330h390v3h-390zM565 333h390v3h-390zM565 336h390v3h-390zM565 339h390v3h-390zM565 342h390v3h-390zM565 345h390v3h-390zM565 348h390v3h-390zM565 351h390v3h-390zM568 354h387v3h-387zM568 357h387v3h-387zM571 360h384v3h-384zM571 363h384v3h-384zM574 366h381v3h-381zM577 369h378v3h-378zM577 372h378v3h-378zM577 375h378v3h-378zM580 378h375v3h-375zM580 381h375v3h-375zM580 384h375v3h-375zM577 387h378v3h-378zM577 390h378v3h-378zM577 393h378v3h-378zM574 396h381v3h-381zM574 399h381v3h-381zM571 402h384v3h-384zM568 405h387v3h-387zM565 408h390v3h-390zM565 411h390v3h-390zM565 414h390v3h-390zM565 417h390v3h-390zM565 420h390v3h-390zM565 423h390v3h-390zM565 426h390v3h-390zM565 429h390v3h-390zM562 432h393v3h-393zM562 435h393v3h-393zM562 438h393v3h-393zM562 441h393v3h-393zM562 444h393v3h-393zM562 447h393v3h-393zM562 450h393v3h-393zM562 453h393v3h-393zM562 456h393v3h-393zM562 459h393v3h-393zM562 462h393v3h-393zM562 465h393v3h-393zM562 468h393v3h-393zM562 471h393v3h-393zM562 474h393v3h-393zM562 477h393v3h-393zM559 480h396v3h-396zM559 483h396v3h-396zM559 486h396v3h-396zM559 489h396v3h-396zM559 492h396v3h-396zM559 495h396v3h-396zM559 498h396v3h-396zM559 501h396v3h-396zM127 504h15v3h-15zM559 504h396v3h-396zM127 507h63v3h-63zM559 507h396v3h-396z"/><path d="M137.2 123.0V509M147.5 123.0V509M157.7 123.0V509M168.0 123.0V509M178.2 123.0V509M188.5 123.0V509M198.7 123.0V509M209.0 123.0V509M219.2 123.0V509M229.4 123.0V509M239.7 123.0V509M249.9 123.0V509M260.2 123.0V509M270.4 123.0V509M280.7 123.0V509M290.9 123.0V509M301.1 123.0V509M311.4 123.0V509M321.6 123.0V509M331.9 123.0V509M342.1 123.0V509M352.4 123.0V509M362.6 123.0V509M372.9 123.0V509M383.1 123.0V509M393.3 123.0V509M403.6 123.0V509M413.8 123.0V509M424.1 123.0V509M434.3 123.0V509M444.6 123.0V509M454.8 123.0V509M465.0 123.0V509M475.3 123.0V509M485.5 123.0V509M495.8 123.0V509M506.0 123.0V509M516.3 123.0V509M526.5 123.0V509M536.8 123.0V509M127.0 133.2H547M127.0 143.3H547M127.0 153.5H547M127.0 163.6H547M127.0 173.8H547M127.0 183.9H547M127.0 194.1H547M127.0 204.3H547M127.0 214.4H547M127.0 224.6H547M127.0 234.7H547M127.0 244.9H547M127.0 255.1H547M127.0 265.2H547M127.0 275.4H547M127.0 285.5H547M127.0 295.7H547M127.0 305.8H547M127.0 316.0H547M127.0 326.2H547M127.0 336.3H547M127.0 346.5H547M127.0 356.6H547M127.0 366.8H547M127.0 376.9H547M127.0 387.1H547M127.0 397.3H547M127.0 407.4H547M127.0 417.6H547M127.0 427.7H547M127.0 437.9H547M127.0 448.1H547M127.0 458.2H547M127.0 468.4H547M127.0 478.5H547M127.0 488.7H547M127.0 498.8H547M557.4 304.0V509M567.9 304.0V509M578.3 304.0V509M588.7 304.0V509M599.2 304.0V509M609.6 304.0V509M620.1 304.0V509M630.5 304.0V509M640.9 304.0V509M651.4 304.0V509M661.8 304.0V509M672.2 304.0V509M682.7 304.0V509M693.1 304.0V509M703.5 304.0V509M714.0 304.0V509M724.4 304.0V509M734.8 304.0V509M745.3 304.0V509M755.7 304.0V509M766.2 304.0V509M776.6 304.0V509M787.0 304.0V509M797.5 304.0V509M807.9 304.0V509M818.3 304.0V509M828.8 304.0V509M839.2 304.0V509M849.6 304.0V509M860.1 304.0V509M870.5 304.0V509M880.9 304.0V509M891.4 304.0V509M901.8 304.0V509M912.3 304.0V509M922.7 304.0V509M933.1 304.0V509M943.6 304.0V509M547.0 314.2H954M547.0 324.5H954M547.0 334.8H954M547.0 345.0H954M547.0 355.2H954M547.0 365.5H954M547.0 375.8H954M547.0 386.0H954M547.0 396.2H954M547.0 406.5H954M547.0 416.8H954M547.0 427.0H954M547.0 437.2H954M547.0 447.5H954M547.0 457.8H954M547.0 468.0H954M547.0 478.2H954M547.0 488.5H954M547.0 498.8H954" stroke="#000" stroke-opacity="0.5" stroke-width="0.9" fill="none"/><path d="M342.1 214.4V305.8M168.0 163.6H280.7M198.7 356.6V478.5M454.8 163.6H516.3M157.7 173.8V265.2M168.0 397.3H229.4M188.5 397.3V427.7M198.7 498.8H260.2M516.3 153.5V275.4M157.7 387.1H219.2M157.7 204.3V275.4M219.2 397.3H331.9M209.0 316.0V427.7M188.5 244.9H311.4M506.0 244.9V326.2M485.5 194.1H547.0M178.2 153.5V275.4M444.6 265.2H547.0M485.5 397.3V478.5M506.0 427.7H547.0M372.9 316.0V376.9M280.7 244.9H321.6M506.0 316.0V427.7M342.1 448.1H485.5M424.1 305.8V427.7M198.7 173.8H311.4M403.6 224.6V305.8M444.6 224.6H536.8M157.7 163.6V275.4M331.9 498.8H413.8M362.6 437.9V509.0M168.0 427.7H209.0M311.4 427.7V509.0M157.7 173.8H301.1M331.9 407.4V478.5M352.4 376.9H383.1M434.3 346.5V397.3M444.6 204.3H475.3M270.4 305.8V356.6M383.1 285.5H475.3M880.9 324.5V375.8M807.9 457.8H922.7M734.8 345.0V437.2M724.4 488.5H870.5M828.8 416.8V509.0M640.9 386.0H682.7M672.2 345.0V406.5M547.0 386.0H651.4M943.6 355.2V427.0M547.0 406.5H599.2M828.8 416.8V498.8M880.9 355.2H954.0M588.7 447.5V509.0M807.9 437.2H901.8M620.1 457.8V509.0M672.2 324.5H714.0M693.1 447.5V498.8M766.2 345.0H891.4M588.7 334.8V365.5M640.9 498.8H755.7M620.1 416.8V447.5M682.7 334.8H807.9M807.9 345.0V416.8M787.0 427.0H891.4" stroke="#000" stroke-width="1" fill="none"/></g><path d="M127.0 123.0H547V304H954V509H127Z" stroke="#000" stroke-width="1.2" fill="none"/><path d="M544.0 119.0 L554.0 119.0 L551.0 392.0 L546.0 392.0 Z" fill="#0a14e8" stroke="#001" stroke-width="1"/><path d="M544.0 123.0H554.0M544.1 127.0H553.9M544.1 131.0H553.9M544.1 135.1H553.8M544.1 139.1H553.8M544.2 143.1H553.7M544.2 147.1H553.7M544.2 151.1H553.6M544.3 155.1H553.6M544.3 159.1H553.6M544.3 163.2H553.5M544.4 167.2H553.5M544.4 171.2H553.4M544.4 175.2H553.4M544.4 179.2H553.3M544.5 183.2H553.3M544.5 187.2H553.2M544.5 191.3H553.2M544.6 195.3H553.2M544.6 199.3H553.1M544.6 203.3H553.1M544.6 207.3H553.0M544.7 211.3H553.0M544.7 215.4H552.9M544.7 219.4H552.9M544.8 223.4H552.9M544.8 227.4H552.8M544.8 231.4H552.8M544.9 235.4H552.7M544.9 239.4H552.7M544.9 243.5H552.6M544.9 247.5H552.6M545.0 251.5H552.5M545.0 255.5H552.5M545.0 259.5H552.5M545.1 263.5H552.4M545.1 267.5H552.4M545.1 271.6H552.3M545.1 275.6H552.3M545.2 279.6H552.2M545.2 283.6H552.2M545.2 287.6H552.1M545.3 291.6H552.1M545.3 295.6H552.1M545.3 299.7H552.0M545.4 303.7H552.0M545.4 307.7H551.9M545.4 311.7H551.9M545.4 315.7H551.8M545.5 319.7H551.8M545.5 323.8H551.8M545.5 327.8H551.7M545.6 331.8H551.7M545.6 335.8H551.6M545.6 339.8H551.6M545.6 343.8H551.5M545.7 347.8H551.5M545.7 351.9H551.4M545.7 355.9H551.4M545.8 359.9H551.4M545.8 363.9H551.3M545.8 367.9H551.3M545.9 371.9H551.2M545.9 375.9H551.2M545.9 380.0H551.1M545.9 384.0H551.1M546.0 388.0H551.0M549.0 119.0L548.5 392.0" stroke="#000" stroke-opacity="0.7" stroke-width="0.8" fill="none"/><path d="M281.0 336.0L550.0 185.0" stroke="#000" stroke-width="1.8"/><path d="M281.0 336.0L362.0 291.0" stroke="#000" stroke-width="3"/></svg>
<div class="a" style="left:557px;top:240.5px;font-size:17.6px;line-height:19px;color:#1a1a1a;white-space:nowrap">0.005224<br>0.004789<br>0.004353<br>0.003918<br>0.003483<br>0.003047<br>0.002612<br>0.002177<br>0.001741<br>0.001306<br>0.0008707<br>0.0004353<br>0</div>
<!-- logo -->
<div class="a" style="left:1378px;top:172px;width:89px;height:51px;background:#e8d800;border-radius:2px"></div>
<svg class="a" style="left:1378px;top:172px" width="89" height="51"><path d="M33 1 Q10 1 2.5 20 Q0 37 20 51 L48 51 L49 37 L17 36 Q14 28 18 20 Q23 13 34 13 L43 13 L53 1 Z" fill="#5a5a5a"/><path d="M53 1 L88 1 L88 6 L77 13 L54 13 Q42 18 42 30 L42 51 L36 51 L36 30 Q38 10 53 1Z M56 30 L67 30 L59 40 L43 40 L43 30Z" fill="#7a7a7a"/><path d="M54 1 L88 1 L77 13 L56 13 Q44 16 43 30 L61 30 L57 40 L43 40 L43 51 L37 51 L38 28 Q40 10 54 1Z" fill="#777"/></svg>
<svg class="a" style="left:1378px;top:224px" width="92" height="12"><g stroke="#3a3a3a" stroke-width="1.3" fill="none"><path d="M9 2.5H4Q2.5 2.5 2.5 4V7.5Q2.5 9 4 9H9"/><path d="M15.5 4V9M15.5 2V2.8"/><path d="M22.5 4L27 9L31.5 4"/><path d="M35.5 4V9M35.5 2V2.8"/><path d="M42 2V9"/><path d="M56 2.5H49.5V9M49.5 5.8H55"/><path d="M69 2.5H62.5V9H69M62.5 5.8H68"/><path d="M75.5 9V2.5L81.5 8L87.5 2.5V9"/></g></svg>
<!-- triad -->
<svg class="a" style="left:514px;top:681px" width="90" height="80"><path d="M16 62V18" stroke="#1ab21a" stroke-width="2.5"/><path d="M12 22L16 12L20 22Z" fill="#1ab21a"/><path d="M16 62H58" stroke="#f01010" stroke-width="2.5"/><path d="M55 58L66 62L55 66Z" fill="#f01010"/><circle cx="16" cy="62" r="6.5" fill="#111"/><circle cx="16" cy="62" r="3.5" fill="#1020c0"/><text x="17" y="63" font-size="12" fill="#222" font-family="Liberation Sans">Z</text><text x="18" y="12" font-size="14" fill="#222" font-family="Liberation Sans">Y</text><text x="67" y="64" font-size="14" fill="#222" font-family="Liberation Sans">X</text></svg>
<div class="t" style="left:1433px;top:777px;font-size:17px;line-height:20px;color:#1a1a1a">A_4</div>


<!-- ENTITIES PANEL -->
<div class="ph" style="left:1484px;top:146px;width:196px;height:20px">Entities of the model</div>
<svg class="a" style="left:1645px;top:150px" width="30" height="12"><path d="M2.5 1.5H7.5M3.5 1.5V6.5M6.5 1.5V6.5M1.5 6.5H8.5M5 6.5V11" stroke="#fff" stroke-width="1.2" fill="none"/><path d="M19 1.5L27 9.5M27 1.5L19 9.5" stroke="#fff" stroke-width="1.6"/></svg>
<div class="a" style="left:1484px;top:166px;width:196px;height:24px;background:linear-gradient(#8a8a8a,#b2b2b2 60%,#a0a0a0)"></div>
<div class="a" style="left:1493px;top:167px;width:20px;height:21px;border:1px solid #d8a850;border-radius:3px;background:#fbd97a"></div>
<svg class="a" style="left:1484px;top:166px" width="196" height="24">
<defs><linearGradient id="tg1" x1="0" y1="0" x2="1" y2="1"><stop offset="0" stop-color="#e8f4fa"/><stop offset="1" stop-color="#8ab8d0"/></linearGradient><linearGradient id="tg2" x1="0" y1="0" x2="1" y2="0"><stop offset="0" stop-color="#f0f0a0"/><stop offset="1" stop-color="#7a9a20"/></linearGradient></defs>
<rect x="13" y="5.5" width="11.5" height="11.5" fill="url(#tg1)" stroke="#1a2a6a" stroke-width="1.6"/><path d="M18.75 5.5V17M13 11.25H24.5" stroke="#1a2a6a" stroke-width="1.5"/>
<path d="M37 9L40 6H47V13L44 16H37Z" fill="#f4f8fc" stroke="#1a4ab0" stroke-width="1.1"/><path d="M37 9H44V16M44 9L47 6" stroke="#1a4ab0" stroke-width="1" fill="none"/><path d="M34 11.5H37M47 11.5H50M40 2.5V5.5M37 16.5L35 19" stroke="#e02020" stroke-width="1.2"/>
<path d="M57 17Q60 11 64 13Q68 15 71 10V6" stroke="#222" stroke-width="1.5" fill="none"/><path d="M58 14.5L59.5 13M62 12L64 13M67 13L69 11.5M70.5 8L71 6.5" stroke="#e03030" stroke-width="1.3"/>
<path d="M80 8L85 5.5L93 7V15L88 18L80 16Z" fill="#b89070" stroke="#5a4030" stroke-width="0.7"/><path d="M80 8L88 10L93 7M88 10V18" stroke="#6a4a30" stroke-width="0.6" fill="none"/><circle cx="84" cy="12" r="1" fill="#d8a060"/><circle cx="90" cy="13" r="0.8" fill="#e0b070"/>
<path d="M101 6H115V9H110V14H115V17H101V14H106V9H101Z" fill="#b8d4e0" stroke="#5a8aa0" stroke-width="0.9"/><path d="M102 7H114M107 10V13" stroke="#fff" stroke-width="0.8"/>
<rect x="124" y="5" width="14" height="14" rx="1" fill="url(#tg2)" stroke="#222" stroke-width="1.2"/><path d="M131 5L136 9L132 11L136 14L131 19" stroke="#222" stroke-width="1" fill="none"/>
<path d="M146 5L158 17" stroke="#888" stroke-width="1.4"/><path d="M153 12L158 17" stroke="#f0b020" stroke-width="2.4"/><path d="M159 5L147 17" stroke="#777" stroke-width="1.6"/><circle cx="158" cy="6" r="2" fill="none" stroke="#888" stroke-width="1.2"/>
<rect x="167.5" y="6.5" width="6" height="6" fill="#cfe4f0" stroke="#1a2a6a" stroke-width="1.3"/><rect x="172.5" y="11.5" width="6" height="6" fill="#cfe4f0" stroke="#1a2a6a" stroke-width="1.3"/><rect x="172" y="11" width="2" height="2" fill="#e02020"/>
<path d="M194 7L196 5M189 19H196" stroke="#d09020" stroke-width="1.6"/><path d="M189 19H196" stroke="#222" stroke-width="1.2"/>
</svg>
<div class="a" style="left:1484px;top:190px;width:196px;height:614px;background:#fff"></div>
<div class="sec" style="top:199px">Coordinate systems</div>
<div class="sec" style="top:225px">Geometry</div>
<div class="sec" style="top:251px">Materials</div>
<div class="sec" style="top:277px">Sections</div>
<div class="sec up" style="top:303px">Structural elements</div>
<div class="a" style="left:1492px;top:322px;width:180px;height:172px;border:1px solid #c8ccd4;border-top:none;background:#fff"></div>
<!-- table -->
<div class="a" style="left:1493px;top:323px;width:178px;height:22px;background:linear-gradient(#bdbdbd,#b0b0b0);border-top:1px solid #555;border-bottom:1px solid #444;border-left:1px solid #555"></div>
<svg class="a" style="left:1496px;top:328px" width="14" height="14"><path d="M12 3V12H3Z" fill="#d4d4d4"/></svg>
<div class="a" style="left:1512px;top:324px;width:1px;height:21px;background:#555"></div>
<div class="t" style="left:1518px;top:327px">Name</div>
<div class="a" style="left:1591px;top:326px;width:1px;height:16px;background:#555"></div>
<div class="t" style="left:1596px;top:327px">Type</div>
<div class="a" style="left:1669px;top:326px;width:1px;height:16px;background:#555"></div>
<div class="a" style="left:1493px;top:345px;width:20px;height:134px;background:#b6b6b6;border-left:1px solid #555;border-right:1px solid #555;border-bottom:1px solid #555"></div>
<div class="a" style="left:1513px;top:345px;width:158px;height:18px;background:#6e6e6e"></div>
<div class="a" style="left:1513px;top:363px;width:158px;height:1px;background:#e6e6e6"></div>
<div class="a" style="left:1591px;top:345px;width:1px;height:18px;background:#888"></div>
<div class="t" style="left:1535px;top:347px;color:#d8d8d8;font-size:11.5px">Ex2</div>
<div class="t" style="left:1596px;top:347px;color:#d8d8d8;font-size:11.5px">2D Solid - P...</div>
<svg class="a" style="left:1515px;top:346px" width="18" height="18"><defs><linearGradient id="seg345" x1="0" y1="0" x2="1" y2="1"><stop offset="0" stop-color="#f4e890"/><stop offset="1" stop-color="#a8b020"/></linearGradient></defs><rect x="1.5" y="1.5" width="14" height="14" rx="1" fill="url(#seg345)" stroke="#333"/><path d="M8 1.5L15 8L9 15M12 1.5L8 8L13 15" stroke="#333" stroke-width="0.9" fill="none"/></svg>
<div class="a" style="left:1493px;top:364px;width:20px;height:1px;background:#555"></div>
<div class="a" style="left:1513px;top:382px;width:158px;height:1px;background:#e6e6e6"></div>
<div class="a" style="left:1591px;top:364px;width:1px;height:18px;background:#e6e6e6"></div>
<div class="t" style="left:1535px;top:366px;color:#111;font-size:11.5px">Terrain</div>
<div class="t" style="left:1596px;top:366px;color:#111;font-size:11.5px">2D Solid - P...</div>
<svg class="a" style="left:1515px;top:365px" width="18" height="18"><defs><linearGradient id="seg364" x1="0" y1="0" x2="1" y2="1"><stop offset="0" stop-color="#f4e890"/><stop offset="1" stop-color="#a8b020"/></linearGradient></defs><rect x="1.5" y="1.5" width="14" height="14" rx="1" fill="url(#seg364)" stroke="#333"/><path d="M8 1.5L15 8L9 15M12 1.5L8 8L13 15" stroke="#333" stroke-width="0.9" fill="none"/></svg>
<div class="a" style="left:1493px;top:383px;width:20px;height:1px;background:#555"></div>
<div class="a" style="left:1513px;top:383px;width:158px;height:18px;background:#6e6e6e"></div>
<div class="a" style="left:1513px;top:401px;width:158px;height:1px;background:#e6e6e6"></div>
<div class="a" style="left:1591px;top:383px;width:1px;height:18px;background:#888"></div>
<div class="t" style="left:1535px;top:385px;color:#d8d8d8;font-size:11.5px">Ex1</div>
<div class="t" style="left:1596px;top:385px;color:#d8d8d8;font-size:11.5px">2D Solid - P...</div>
<svg class="a" style="left:1515px;top:384px" width="18" height="18"><defs><linearGradient id="seg383" x1="0" y1="0" x2="1" y2="1"><stop offset="0" stop-color="#f4e890"/><stop offset="1" stop-color="#a8b020"/></linearGradient></defs><rect x="1.5" y="1.5" width="14" height="14" rx="1" fill="url(#seg383)" stroke="#333"/><path d="M8 1.5L15 8L9 15M12 1.5L8 8L13 15" stroke="#333" stroke-width="0.9" fill="none"/></svg>
<div class="a" style="left:1493px;top:402px;width:20px;height:1px;background:#555"></div>
<div class="a" style="left:1513px;top:402px;width:158px;height:18px;background:#6e6e6e"></div>
<div class="a" style="left:1513px;top:420px;width:158px;height:1px;background:#e6e6e6"></div>
<div class="a" style="left:1591px;top:402px;width:1px;height:18px;background:#888"></div>
<div class="t" style="left:1535px;top:404px;color:#d8d8d8;font-size:11.5px">Ex3</div>
<div class="t" style="left:1596px;top:404px;color:#d8d8d8;font-size:11.5px">2D Solid - P...</div>
<svg class="a" style="left:1515px;top:403px" width="18" height="18"><defs><linearGradient id="seg402" x1="0" y1="0" x2="1" y2="1"><stop offset="0" stop-color="#f4e890"/><stop offset="1" stop-color="#a8b020"/></linearGradient></defs><rect x="1.5" y="1.5" width="14" height="14" rx="1" fill="url(#seg402)" stroke="#333"/><path d="M8 1.5L15 8L9 15M12 1.5L8 8L13 15" stroke="#333" stroke-width="0.9" fill="none"/></svg>
<div class="a" style="left:1493px;top:421px;width:20px;height:1px;background:#555"></div>
<div class="a" style="left:1513px;top:439px;width:158px;height:1px;background:#e6e6e6"></div>
<div class="a" style="left:1591px;top:421px;width:1px;height:18px;background:#e6e6e6"></div>
<div class="t" style="left:1535px;top:423px;color:#111;font-size:11.5px">Wall</div>
<div class="t" style="left:1596px;top:423px;color:#111;font-size:11.5px">2D Solid - P...</div>
<svg class="a" style="left:1515px;top:422px" width="18" height="18"><defs><linearGradient id="seg421" x1="0" y1="0" x2="1" y2="1"><stop offset="0" stop-color="#f4e890"/><stop offset="1" stop-color="#a8b020"/></linearGradient></defs><rect x="1.5" y="1.5" width="14" height="14" rx="1" fill="url(#seg421)" stroke="#333"/><path d="M8 1.5L15 8L9 15M12 1.5L8 8L13 15" stroke="#333" stroke-width="0.9" fill="none"/></svg>
<div class="a" style="left:1493px;top:440px;width:20px;height:1px;background:#555"></div>
<div class="a" style="left:1513px;top:458px;width:158px;height:1px;background:#e6e6e6"></div>
<div class="a" style="left:1591px;top:440px;width:1px;height:18px;background:#e6e6e6"></div>
<div class="t" style="left:1535px;top:442px;color:#111;font-size:11.5px">Root1</div>
<div class="t" style="left:1596px;top:442px;color:#111;font-size:11.5px">Beam</div>
<svg class="a" style="left:1515px;top:441px" width="18" height="18"><path d="M6 2H16V5H12V11H16V15H6V11H9V5H6Z" fill="#d08a20" stroke="#7a4a10" stroke-width="0.8"/><path d="M1 16L6 11" stroke="#222" stroke-width="1.2"/><circle cx="1.8" cy="15.5" r="1.2" fill="#111"/></svg>
<div class="a" style="left:1493px;top:459px;width:20px;height:1px;background:#555"></div>
<div class="a" style="left:1513px;top:477px;width:158px;height:1px;background:#e6e6e6"></div>
<div class="a" style="left:1591px;top:459px;width:1px;height:18px;background:#e6e6e6"></div>
<div class="t" style="left:1535px;top:461px;color:#111;font-size:11.5px">Anchor 1</div>
<div class="t" style="left:1596px;top:461px;color:#111;font-size:11.5px">Truss</div>
<svg class="a" style="left:1515px;top:460px" width="18" height="18"><path d="M6 10L12 3L16 6L10 13Z" fill="#d8d8a0" stroke="#333" stroke-width="0.9"/><path d="M6 11Q3 13 4 15Q2 16 1 16" stroke="#222" stroke-width="1" fill="none"/></svg>
<div class="sec" style="top:503px">Model utils</div>
<div class="sec" style="top:529px">Contacts</div>
<div class="sec" style="top:555px">Load groups</div>
<div class="sec" style="top:581px">Boundary conditions</div>
<div class="sec up" style="top:607px">Load cases</div>
<div class="a" style="left:1492px;top:626px;width:180px;height:114px;border:1px solid #c8ccd4;border-top:none;background:#fff"></div>
<div class="a" style="left:1493px;top:626px;width:178px;height:22px;background:linear-gradient(#bdbdbd,#b0b0b0);border-top:1px solid #555;border-bottom:1px solid #444;border-left:1px solid #555"></div>
<svg class="a" style="left:1496px;top:631px" width="14" height="14"><path d="M12 3V12H3Z" fill="#d4d4d4"/></svg>
<div class="a" style="left:1512px;top:627px;width:1px;height:21px;background:#555"></div>
<div class="t" style="left:1518px;top:630px">Name</div>
<div class="a" style="left:1669px;top:629px;width:1px;height:16px;background:#555"></div>
<div class="a" style="left:1493px;top:648px;width:20px;height:77px;background:#b6b6b6;border-left:1px solid #555;border-right:1px solid #555;border-bottom:1px solid #555"></div>
<div class="a" style="left:1513px;top:666px;width:158px;height:1px;background:#e6e6e6"></div>
<div class="t" style="left:1535px;top:650px;color:#111;font-size:11.5px">A_1</div>
<svg class="a" style="left:1516px;top:649px" width="16" height="18"><circle cx="4" cy="4" r="2.3" fill="#2ab0a0"/><circle cx="11" cy="3.5" r="2.3" fill="#2a7ae0"/><path d="M11 5V9" stroke="#2a7ae0" stroke-width="1.4"/><circle cx="4" cy="12" r="2.3" fill="#8ac020"/><circle cx="11" cy="12" r="2.3" fill="#c8c020"/><path d="M1 8H14M1 16H14" stroke="#555" stroke-width="0.8"/></svg>
<div class="a" style="left:1493px;top:667px;width:20px;height:1px;background:#555"></div>
<div class="a" style="left:1513px;top:685px;width:158px;height:1px;background:#e6e6e6"></div>
<div class="t" style="left:1535px;top:669px;color:#111;font-size:11.5px">A_4</div>
<svg class="a" style="left:1516px;top:668px" width="16" height="18"><circle cx="4" cy="4" r="2.3" fill="#2ab0a0"/><circle cx="11" cy="3.5" r="2.3" fill="#2a7ae0"/><path d="M11 5V9" stroke="#2a7ae0" stroke-width="1.4"/><circle cx="4" cy="12" r="2.3" fill="#8ac020"/><circle cx="11" cy="12" r="2.3" fill="#c8c020"/><path d="M1 8H14M1 16H14" stroke="#555" stroke-width="0.8"/></svg>
<div class="a" style="left:1493px;top:686px;width:20px;height:1px;background:#555"></div>
<div class="a" style="left:1513px;top:704px;width:158px;height:1px;background:#e6e6e6"></div>
<div class="t" style="left:1535px;top:688px;color:#111;font-size:11.5px">A_2</div>
<svg class="a" style="left:1516px;top:687px" width="16" height="18"><circle cx="4" cy="4" r="2.3" fill="#2ab0a0"/><circle cx="11" cy="3.5" r="2.3" fill="#2a7ae0"/><path d="M11 5V9" stroke="#2a7ae0" stroke-width="1.4"/><circle cx="4" cy="12" r="2.3" fill="#8ac020"/><circle cx="11" cy="12" r="2.3" fill="#c8c020"/><path d="M1 8H14M1 16H14" stroke="#555" stroke-width="0.8"/></svg>
<div class="a" style="left:1493px;top:705px;width:20px;height:1px;background:#555"></div>
<div class="a" style="left:1513px;top:723px;width:158px;height:1px;background:#e6e6e6"></div>
<div class="t" style="left:1535px;top:707px;color:#111;font-size:11.5px">A_3</div>
<svg class="a" style="left:1516px;top:706px" width="16" height="18"><circle cx="4" cy="4" r="2.3" fill="#2ab0a0"/><circle cx="11" cy="3.5" r="2.3" fill="#2a7ae0"/><path d="M11 5V9" stroke="#2a7ae0" stroke-width="1.4"/><circle cx="4" cy="12" r="2.3" fill="#8ac020"/><circle cx="11" cy="12" r="2.3" fill="#c8c020"/><path d="M1 8H14M1 16H14" stroke="#555" stroke-width="0.8"/></svg>
<svg class="a" style="left:1499px;top:405px" width="10" height="14"><path d="M2 2.5L7 7L2 11.5Z" fill="#666"/></svg>


<!-- OUTPUT PANEL -->
<div class="ph" style="left:466px;top:811px;width:1214px;height:20px;background:linear-gradient(#7a7a7a,#8c8c8c)">Output</div>
<svg class="a" style="left:1645px;top:814px" width="30" height="12"><path d="M2.5 1.5H7.5M3.5 1.5V6.5M6.5 1.5V6.5M1.5 6.5H8.5M5 6.5V11" stroke="#fff" stroke-width="1.2" fill="none"/><path d="M19 1.5L27 9.5M27 1.5L19 9.5" stroke="#fff" stroke-width="1.6"/></svg>
<div class="a" style="left:466px;top:830px;width:1214px;height:133px;background:#3a3a3a"></div>
<div class="a" style="left:467px;top:831px;width:1212px;height:130px;background:#fff"></div>
<div class="a" style="left:466px;top:962px;width:1214px;height:24px;background:linear-gradient(#c4c4c4 0,#bdbdbd 40%,#999 60%,#a8a8a8 100%)"></div>
<svg class="a" style="left:466px;top:961px" width="200" height="26"><path d="M3 1L18 20H98L90 12L82 1" fill="none"/><path d="M3 1L17 19.5H101L87 1" fill="none" stroke="#111" stroke-width="1.4"/><path d="M101 19.5L116 19.5V1H85" fill="none"/><path d="M101 19.5H184L186 17.5V1" fill="#fff" stroke="#111" stroke-width="1"/><path d="M87 1L101 19.5H184V1Z" fill="#fff"/><path d="M101 19.5H184L186 17.5V1" fill="none" stroke="#111" stroke-width="1"/></svg>
<svg class="a" style="left:498px;top:963px" width="16" height="16"><rect x="1" y="1" width="14" height="14" fill="#eee" stroke="#889"/><rect x="1" y="1" width="14" height="2.5" fill="#3a86e0"/></svg>
<div class="t" style="left:521px;top:965px">Output</div>
<svg class="a" style="left:578px;top:963px" width="16" height="16"><rect x="1" y="1" width="14" height="14" fill="#eee" stroke="#889"/><rect x="1" y="1" width="14" height="2.5" fill="#3a86e0"/><circle cx="10" cy="11" r="4.5" fill="#e03030"/><path d="M8 9L12 13M12 9L8 13" stroke="#fff" stroke-width="1.3"/></svg>
<div class="t" style="left:602px;top:965px">Error list</div>
<div class="a" style="left:1661px;top:972px;border-left:5px solid transparent;border-right:5px solid transparent;border-top:5px solid #888"></div>


<!-- STATUS + TASKBAR -->
<div id="status" class="a"></div>
<div class="t" style="left:9px;top:991px;color:#e8e8e8;font-size:11px">Progress</div>
<div class="a" style="left:68px;top:993px;width:114px;height:10px;border-radius:2px;background:linear-gradient(#dfe6ee,#e8ecf2);border:1px solid #aab"></div>
<div class="a" style="left:189px;top:988px;width:1px;height:20px;background:#222"></div>

<div id="task" class="a"></div>
<div class="a" style="left:0;top:1010px;width:1680px;height:40px;background:linear-gradient(100deg,#080808 0%,#121212 20%,#060606 35%,#141414 55%,#0a0a0a 75%,#101010 100%)"></div>
<div class="a" style="left:0;top:1010px;width:48px;height:40px;background:#0a0a0a"></div>
<svg class="a" style="left:16px;top:1022px" width="17" height="17"><path d="M0 2.3L6.8 1.3V7.8H0Z M7.8 1.1L16 0V7.8H7.8Z M0 8.8H6.8V15.4L0 14.5Z M7.8 8.8H16V16.6L7.8 15.5Z" fill="#fff"/></svg>
<div class="a" style="left:48px;top:1010px;width:344px;height:40px;background:#333"></div>
<div class="a" style="left:58px;top:1020px;width:21px;height:21px;border:2.5px solid #f0f0f0;border-radius:50%"></div>
<div class="t" style="left:85px;top:1021px;font-size:14.5px;line-height:18px;color:#b4b4b4">Escribe aquí para buscar</div>
<svg class="a" style="left:364px;top:1021px" width="14" height="18"><rect x="4" y="1" width="6" height="10" rx="3" fill="none" stroke="#bbb" stroke-width="1.2"/><path d="M2 8Q2 14 7 14Q12 14 12 8M7 14V17M4 17H10" stroke="#bbb" stroke-width="1.2" fill="none"/></svg>
<!-- edge -->
<svg class="a" style="left:408px;top:1019px" width="23" height="23"><path d="M3 12Q3 2 12 2Q21 2 21 11V13H8Q8.5 18 14 18Q18 18 20 16V20Q17 22 12.5 22Q3 22 3 12Z M8 10H16Q16 6 12 6Q8.5 6 8 10Z" fill="#1a78d8"/></svg>
<div class="a" style="left:399px;top:1048px;width:40px;height:2px;background:#a8dcf4"></div>
<!-- folder -->
<svg class="a" style="left:457px;top:1020px" width="22" height="20"><path d="M1 2H8L10 4H21V18H1Z" fill="#f4d070"/><path d="M1 6H21V18H1Z" fill="#fce08a"/><path d="M7 18V12H15V18H13V14H9V18Z" fill="#2a8ae0"/></svg>
<div class="a" style="left:448px;top:1048px;width:40px;height:2px;background:#a8dcf4"></div>
<div class="a" style="left:488px;top:1048px;width:10px;height:2px;background:#7aa8bc"></div>
<!-- store -->
<svg class="a" style="left:506px;top:1018px" width="22" height="25"><path d="M7 6Q7 1 11 1Q15 1 15 6" stroke="#fff" stroke-width="1.4" fill="none"/><path d="M1 6H21V24L1 22Z" fill="#fff"/><path d="M4 11H10.5V15.5H4Z M11.5 11H18V15.5H11.5Z M4 16.5H10.5V21H4Z M11.5 16.5H18V21H11.5Z" fill="#111"/></svg>
<!-- Z app -->
<svg class="a" style="left:554px;top:1018px" width="24" height="24"><rect x="0" y="0" width="24" height="24" fill="#3a3a3a"/><path d="M0 5L8 24H0Z" fill="#d83040"/><path d="M5 3H22L12 16H20L16 24H4L13 10H3Z" fill="#d8d8d8"/><path d="M13 24L20 16H24V24Z" fill="#2a4a5a"/></svg>
<!-- chrome -->
<svg class="a" style="left:603px;top:1018px" width="24" height="24"><circle cx="12" cy="12" r="11" fill="#2da44e"/><path d="M12 12L2.5 6.5A11 11 0 0 1 21.5 6.5Z" fill="#db3a2f"/><path d="M12 12L21.5 6.5A11 11 0 0 1 12 23Z" fill="#f5c518"/><circle cx="12" cy="12" r="5" fill="#fff"/><circle cx="12" cy="12" r="3.8" fill="#3a7be8"/></svg>
<!-- outlook -->
<svg class="a" style="left:652px;top:1018px" width="23" height="23"><rect x="1" y="1" width="21" height="21" rx="2" fill="#f7c760" stroke="#e08a10"/><path d="M1 1H12V22H1Z" fill="#f4a020" opacity="0.6"/><ellipse cx="6.5" cy="9.5" rx="4" ry="5" fill="none" stroke="#fff" stroke-width="2.5"/><path d="M9 14L19 12L21 20L7 20Z" fill="#fff" opacity="0.85"/><circle cx="17" cy="10" r="3.5" fill="#fff" stroke="#ccc"/></svg>
<div class="a" style="left:644px;top:1048px;width:40px;height:2px;background:#a8dcf4"></div>
<!-- civilfem active -->
<div class="a" style="left:689px;top:1010px;width:44px;height:40px;background:#3a3a3a"></div>
<div class="a" style="left:733px;top:1010px;width:4px;height:40px;background:#141414"></div>
<svg class="a" style="left:703px;top:1019px" width="22" height="22"><g transform="scale(1.3125)"><rect x="0.5" y="0.5" width="15" height="15" rx="1" fill="#f4dc50" stroke="#666"/><path d="M1 1H10L1 9Z" fill="#fff0a0" opacity="0.8"/><path d="M10.5 1H15L12 4.5L15 6V8L12 8.5L12.5 11L9 15H4L1 12V8L4.5 5Z" fill="#5a5a5e"/><ellipse cx="6.8" cy="10.3" rx="2.3" ry="2.6" fill="#f6dc60"/><path d="M9 5.5L11 3" stroke="#9a9aa0" stroke-width="0.8"/></g></svg>
<div class="a" style="left:689px;top:1048px;width:44px;height:2px;background:#a8dcf4"></div>
<!-- notepad -->
<svg class="a" style="left:750px;top:1018px" width="24" height="25"><path d="M1 2H15L19 6V24H1Z" fill="#f4f4f4" stroke="#888" stroke-width="0.8"/><path d="M1 14H19V24H1Z" fill="#6ab83a"/><path d="M1 20H19V24H1Z" fill="#2a9a2a"/><path d="M5 7V13M7 10H11M9 10H13" stroke="#222" stroke-width="1.2"/><path d="M13 17L22 2" stroke="#f0a020" stroke-width="2.5"/></svg>
<div class="a" style="left:742px;top:1048px;width:40px;height:2px;background:#a8dcf4"></div>
<!-- powerpoint -->
<svg class="a" style="left:799px;top:1018px" width="23" height="23"><rect x="1" y="1" width="21" height="21" rx="2" fill="#fbd8b8" stroke="#e07030"/><path d="M5 18V4H10Q14 4 14 8Q14 12 10 12H8V18Z" fill="#e86a20"/><circle cx="16" cy="15" r="4" fill="#f05a40"/><path d="M7 19Q14 22 20 17" stroke="#fff" stroke-width="1.2" fill="none"/></svg>
<div class="a" style="left:791px;top:1048px;width:37px;height:2px;background:#a8dcf4"></div>
<div class="a" style="left:828px;top:1048px;width:10px;height:2px;background:#7aa8bc"></div>
<!-- tray -->
<svg class="a" style="left:1514px;top:1025px" width="14" height="9"><path d="M1 8L7 2L13 8" stroke="#fff" stroke-width="1.2" fill="none"/></svg>
<svg class="a" style="left:1536px;top:1023px" width="18" height="16"><rect x="5.5" y="1.5" width="11" height="9" fill="none" stroke="#fff" stroke-width="1.1"/><rect x="1.5" y="1.5" width="3" height="3" fill="none" stroke="#fff" stroke-width="1"/><path d="M3 4.5V14M3 12.5H13M10 10.5V12.5" stroke="#fff" stroke-width="1.1" fill="none"/></svg>
<div class="t" style="left:1578px;top:1014px;color:#fff;font-size:11.5px">21:29</div>
<div class="t" style="left:1563px;top:1031px;color:#fff;font-size:11.5px">23/05/2017</div>
<svg class="a" style="left:1638px;top:1021px" width="18" height="18"><path d="M1.5 2.5H15.5V13.5H10.5L8.5 15.5L6.5 13.5H1.5Z" fill="none" stroke="#fff" stroke-width="1.2"/></svg>
<div class="a" style="left:1675px;top:1010px;width:1px;height:40px;background:#555"></div>

</body></html>
